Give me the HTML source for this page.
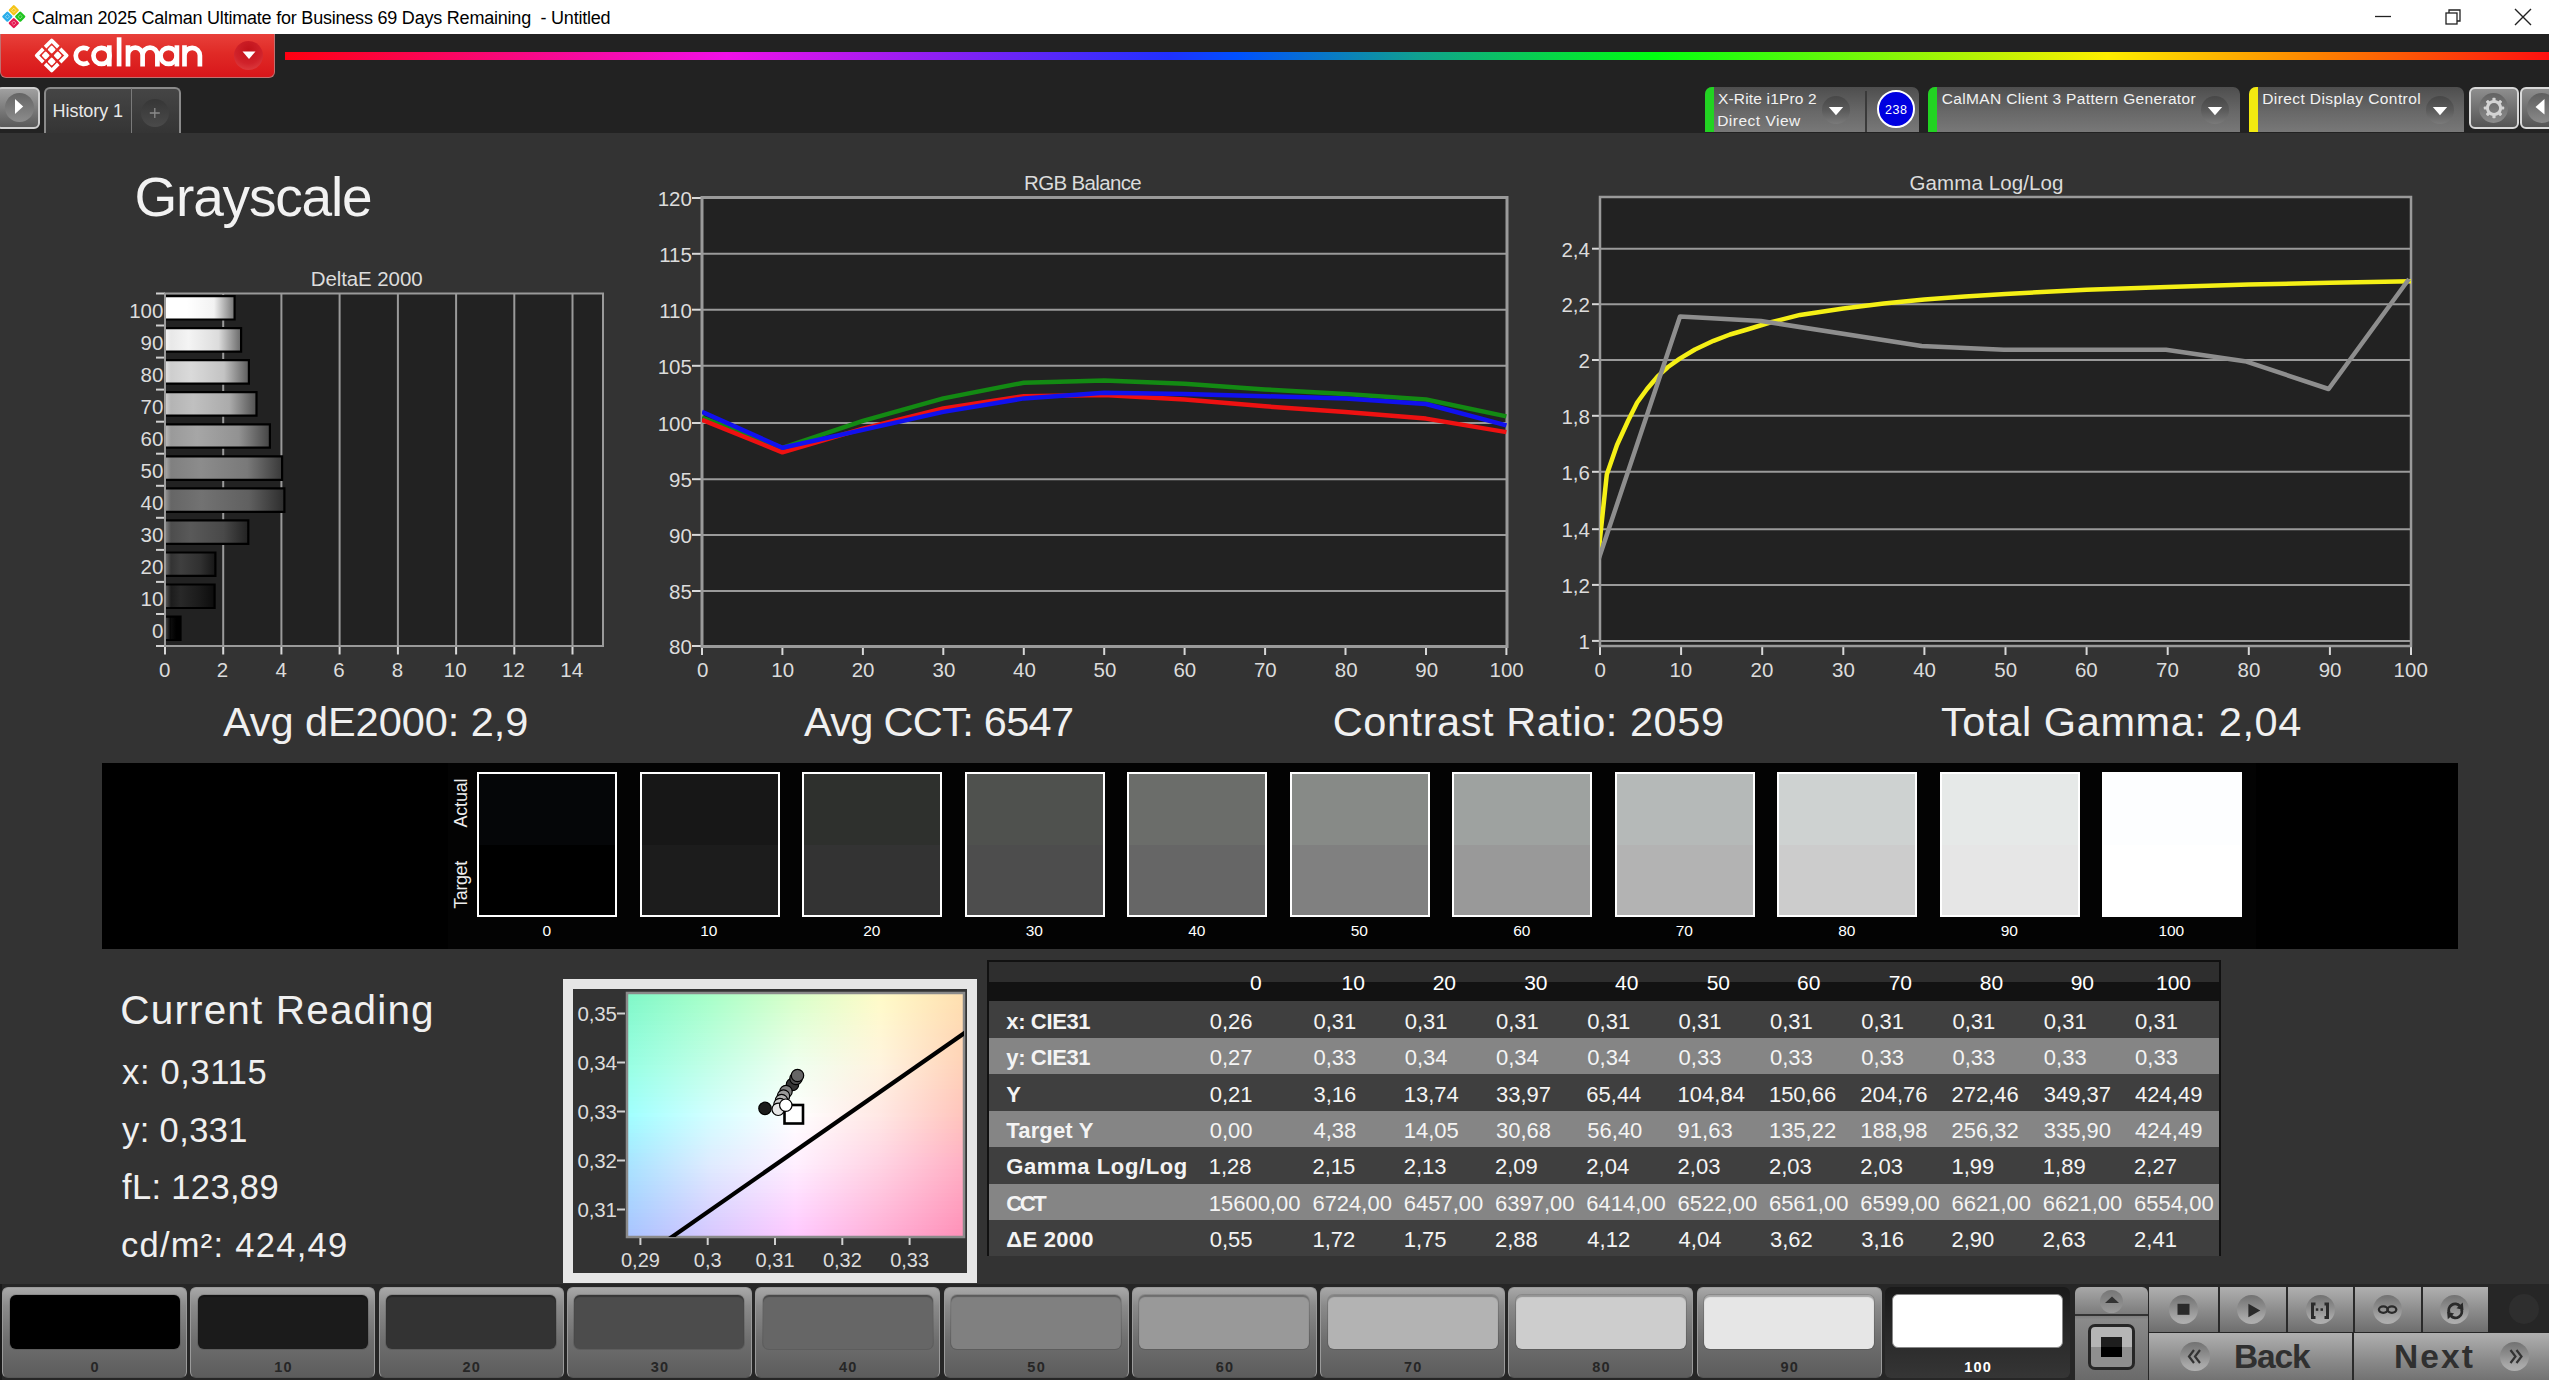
<!DOCTYPE html><html><head><meta charset="utf-8"><style>
*{box-sizing:border-box}
html,body{margin:0;padding:0}
body{width:2549px;height:1380px;overflow:hidden;position:relative;background:#333;font-family:"Liberation Sans", sans-serif;}
.a{position:absolute;white-space:nowrap}
svg{overflow:visible}
</style></head><body>

<div class="a" style="left:0;top:0;width:2549px;height:34px;background:#fff"></div>
<svg class="a" style="left:0;top:0" width="30" height="34" viewBox="0 0 30 34">
<g transform="translate(13.8,16.7) rotate(45)">
<rect x="-8.5" y="-8.5" width="7.9" height="7.9" rx="1.2" fill="#f5c518"/>
<rect x="0.6" y="-8.5" width="7.9" height="7.9" rx="1.2" fill="#1fc41f"/>
<rect x="-8.5" y="0.6" width="7.9" height="7.9" rx="1.2" fill="#2aaeea"/>
<rect x="0.6" y="0.6" width="7.9" height="7.9" rx="1.2" fill="#e51a50"/>
</g>
<g transform="translate(13.8,16.7) rotate(45)" fill="none" stroke="rgba(255,255,255,0.45)" stroke-width="0.9">
<rect x="-6" y="-6" width="3" height="3"/><rect x="3" y="-6" width="3" height="3"/><rect x="-6" y="3" width="3" height="3"/><rect x="3" y="3" width="3" height="3"/>
</g></svg>
<svg class="a" style="left:2360px;top:0" width="189" height="34">
<line x1="15" y1="16.5" x2="31" y2="16.5" stroke="#222" stroke-width="1.3"/>
<rect x="86" y="13" width="11" height="11" fill="none" stroke="#222" stroke-width="1.3"/>
<path d="M89 13 V10 H100 V21 H97" fill="none" stroke="#222" stroke-width="1.3"/>
<path d="M155 9 L171 25 M171 9 L155 25" stroke="#222" stroke-width="1.4"/>
</svg>
<div class="a" style="left:0;top:34px;width:2549px;height:99px;background:#222"></div>
<div class="a" style="left:0;top:34px;width:275px;height:44px;background:linear-gradient(#e8403a,#e02a26 45%,#d8161a);border:1px solid #c07070;border-top:none;border-radius:0 0 6px 6px"></div>
<svg class="a" style="left:0;top:34px" width="230" height="44" viewBox="0 34 230 44">
<g transform="translate(51.7,55.5) rotate(45)" fill="none" stroke="#fff" stroke-width="3.7" stroke-linejoin="round">
<path d="M-10.6 -1.3 V-10.6 H-1.3"/><path d="M1.3 -10.6 H10.6 V-1.3"/><path d="M10.6 1.3 V10.6 H1.3"/><path d="M-1.3 10.6 H-10.6 V1.3"/>
<g fill="#fff" stroke="none"><rect x="-7.3" y="-7.3" width="6.1" height="6.1" rx="1.2"/><rect x="1.2" y="-7.3" width="6.1" height="6.1" rx="1.2"/><rect x="-7.3" y="1.2" width="6.1" height="6.1" rx="1.2"/><rect x="1.2" y="1.2" width="6.1" height="6.1" rx="1.2"/></g>
</g>
<g fill="none" stroke="#fff" stroke-width="4.7">
<path d="M88.6 49.4 A8.05 8.05 0 1 0 88.6 62.3"/>
<circle cx="101.5" cy="55.85" r="8.05"/><path d="M109.3 45.3 V66.4"/>
<path d="M119.1 37.3 V66.4"/>
<path d="M128 45.3 V66.4 M128 55 A7.3 7.3 0 0 1 142.6 55 V66.4 M142.6 55 A7.3 7.3 0 0 1 157.4 55 V66.4"/>
<circle cx="168.6" cy="55.85" r="8.05"/><path d="M176.9 45.3 V66.4"/>
<path d="M184.5 45.3 V66.4 M184.5 55.5 A7.7 7.7 0 0 1 199.9 55.5 V66.4"/>
</g></svg>
<div class="a" style="left:234px;top:41px;width:29px;height:29px;border-radius:50%;background:radial-gradient(circle at 50% 30%,#c0121a,#d0222a 55%,#e24848)"></div>
<svg class="a" style="left:240px;top:49px" width="18" height="12"><path d="M2.5 2.5 L15.5 2.5 L9 10 Z" fill="#fff"/></svg>
<div class="a" style="left:285px;top:52px;width:2264px;height:8px;background:linear-gradient(90deg,#ff0010 0%,#f010e8 19.5%,#2030ff 39%,#0050ff 42%,#10a090 50%,#00ff10 60.5%,#ffee00 80.5%,#ff8000 90%,#ff1010 100%)"></div>
<div class="a" style="left:-4px;top:86.5px;width:44px;height:42px;border-radius:6px;border:2px solid #d0d0d0;background:linear-gradient(#a0a0a0,#5a5a5a)"></div>
<div class="a" style="left:5px;top:93px;width:29px;height:29px;border-radius:50%;background:linear-gradient(#646464,#8c8c8c)"></div>
<svg class="a" style="left:10px;top:96px" width="20" height="22"><path d="M5 3 L13.2 10.5 L5 18 Z" fill="#fff"/></svg>
<div class="a" style="left:44px;top:87px;width:137px;height:46px;border-radius:6px 6px 0 0;border:2px solid #8a8a8a;border-bottom:none;background:linear-gradient(#454545,#353535)"></div>
<div class="a" style="left:130.5px;top:88px;width:1.5px;height:45px;background:#7a7a7a"></div>
<div class="a" style="left:141px;top:98.5px;width:28px;height:28px;border-radius:50%;background:linear-gradient(#363636,#4a4a4a)"></div>
<svg class="a" style="left:144px;top:102px" width="21" height="21"><path d="M10.8 6 V16 M5.8 11 H15.8" stroke="#8a8a8a" stroke-width="1.3"/></svg>
<div class="a" style="left:1705px;top:87px;width:214px;height:45px;border-radius:7px 7px 0 0;background:linear-gradient(#4e4e4e,#686868 55%,#787878)"></div>
<div class="a" style="left:1705px;top:87px;width:9px;height:45px;border-radius:7px 0 0 0;background:#22d322"></div>
<div class="a" style="left:1822px;top:95.5px;width:28px;height:28px;border-radius:50%;background:linear-gradient(#474747,#5a5a5a 50%,#7a7a7a)"></div>
<svg class="a" style="left:1827px;top:105px" width="18" height="12"><path d="M1.8 2 L16.2 2 L9 10.2 Z" fill="#fff"/></svg>
<div class="a" style="left:1865px;top:91px;width:2px;height:41px;background:#3a3a3a"></div>
<div class="a" style="left:1877px;top:90px;width:38px;height:38px;border-radius:50%;background:#0000e0;border:2px solid #fff"></div>
<div class="a" style="left:1928px;top:87px;width:312px;height:45px;border-radius:7px 7px 0 0;background:linear-gradient(#4e4e4e,#686868 55%,#787878)"></div>
<div class="a" style="left:1928px;top:87px;width:9px;height:45px;border-radius:7px 0 0 0;background:#22d322"></div>
<div class="a" style="left:2201px;top:95.5px;width:28px;height:28px;border-radius:50%;background:linear-gradient(#474747,#5a5a5a 50%,#7a7a7a)"></div>
<svg class="a" style="left:2206px;top:105px" width="18" height="12"><path d="M1.8 2 L16.2 2 L9 10.2 Z" fill="#fff"/></svg>
<div class="a" style="left:2249px;top:87px;width:215px;height:45px;border-radius:7px 7px 0 0;background:linear-gradient(#4e4e4e,#686868 55%,#787878)"></div>
<div class="a" style="left:2249px;top:87px;width:9px;height:45px;border-radius:7px 0 0 0;background:#f2ea10"></div>
<div class="a" style="left:2426px;top:95.5px;width:28px;height:28px;border-radius:50%;background:linear-gradient(#474747,#5a5a5a 50%,#7a7a7a)"></div>
<svg class="a" style="left:2431px;top:105px" width="18" height="12"><path d="M1.8 2 L16.2 2 L9 10.2 Z" fill="#fff"/></svg>
<div class="a" style="left:2469px;top:86.5px;width:50px;height:42px;border-radius:6px;border:2px solid #d8d8d8;background:linear-gradient(#8e8e8e,#555)"></div>
<div class="a" style="left:2479px;top:93px;width:29px;height:30px;border-radius:50%;background:linear-gradient(#626262,#8c8c8c)"></div>
<svg class="a" style="left:2479.5px;top:94px" width="28" height="28" viewBox="-14 -14 28 28">
<g fill="#d4d4d4"><rect x="-1.6" y="-10.2" width="3.2" height="4" rx="0.8" transform="rotate(0)"/><rect x="-1.6" y="-10.2" width="3.2" height="4" rx="0.8" transform="rotate(45)"/><rect x="-1.6" y="-10.2" width="3.2" height="4" rx="0.8" transform="rotate(90)"/><rect x="-1.6" y="-10.2" width="3.2" height="4" rx="0.8" transform="rotate(135)"/><rect x="-1.6" y="-10.2" width="3.2" height="4" rx="0.8" transform="rotate(180)"/><rect x="-1.6" y="-10.2" width="3.2" height="4" rx="0.8" transform="rotate(225)"/><rect x="-1.6" y="-10.2" width="3.2" height="4" rx="0.8" transform="rotate(270)"/><rect x="-1.6" y="-10.2" width="3.2" height="4" rx="0.8" transform="rotate(315)"/></g>
<circle r="6.6" fill="none" stroke="#d4d4d4" stroke-width="3"/></svg>
<div class="a" style="left:2520px;top:86.5px;width:40px;height:42px;border-radius:6px;border:2px solid #d8d8d8;background:linear-gradient(#8e8e8e,#555)"></div>
<div class="a" style="left:2527px;top:93px;width:30px;height:30px;border-radius:50%;background:linear-gradient(#5e5e5e,#8a8a8a)"></div>
<svg class="a" style="left:2530px;top:96px" width="19" height="24"><path d="M14.5 3 L5.5 11 L14.5 18.5 Z" fill="#fff"/></svg>
<div class="a" style="left:0;top:133px;width:2549px;height:1151px;background:#333"></div>
<svg class="a" style="left:0;top:0" width="2549" height="1380"><defs><linearGradient id="bg0" gradientUnits="userSpaceOnUse" x1="166" x2="234.6" y1="0" y2="0"><stop offset="0" stop-color="rgb(255,255,255)"/><stop offset="0.073" stop-color="rgb(255,255,255)"/><stop offset="0.3" stop-color="rgb(255,255,255)"/><stop offset="0.7" stop-color="rgb(242,242,242)"/><stop offset="1" stop-color="rgb(114,114,114)"/></linearGradient><linearGradient id="bg1" gradientUnits="userSpaceOnUse" x1="166" x2="241.1" y1="0" y2="0"><stop offset="0" stop-color="rgb(245,245,245)"/><stop offset="0.067" stop-color="rgb(232,232,232)"/><stop offset="0.3" stop-color="rgb(244,244,244)"/><stop offset="0.7" stop-color="rgb(220,220,220)"/><stop offset="1" stop-color="rgb(104,104,104)"/></linearGradient><linearGradient id="bg2" gradientUnits="userSpaceOnUse" x1="166" x2="248.9" y1="0" y2="0"><stop offset="0" stop-color="rgb(224,224,224)"/><stop offset="0.060" stop-color="rgb(206,206,206)"/><stop offset="0.3" stop-color="rgb(218,218,218)"/><stop offset="0.7" stop-color="rgb(195,195,195)"/><stop offset="1" stop-color="rgb(92,92,92)"/></linearGradient><linearGradient id="bg3" gradientUnits="userSpaceOnUse" x1="166" x2="256.5" y1="0" y2="0"><stop offset="0" stop-color="rgb(204,204,204)"/><stop offset="0.055" stop-color="rgb(180,180,180)"/><stop offset="0.3" stop-color="rgb(192,192,192)"/><stop offset="0.7" stop-color="rgb(171,171,171)"/><stop offset="1" stop-color="rgb(81,81,81)"/></linearGradient><linearGradient id="bg4" gradientUnits="userSpaceOnUse" x1="166" x2="269.9" y1="0" y2="0"><stop offset="0" stop-color="rgb(183,183,183)"/><stop offset="0.048" stop-color="rgb(154,154,154)"/><stop offset="0.3" stop-color="rgb(166,166,166)"/><stop offset="0.7" stop-color="rgb(146,146,146)"/><stop offset="1" stop-color="rgb(69,69,69)"/></linearGradient><linearGradient id="bg5" gradientUnits="userSpaceOnUse" x1="166" x2="282.1" y1="0" y2="0"><stop offset="0" stop-color="rgb(162,162,162)"/><stop offset="0.043" stop-color="rgb(128,128,128)"/><stop offset="0.3" stop-color="rgb(140,140,140)"/><stop offset="0.7" stop-color="rgb(121,121,121)"/><stop offset="1" stop-color="rgb(57,57,57)"/></linearGradient><linearGradient id="bg6" gradientUnits="userSpaceOnUse" x1="166" x2="284.4" y1="0" y2="0"><stop offset="0" stop-color="rgb(141,141,141)"/><stop offset="0.042" stop-color="rgb(102,102,102)"/><stop offset="0.3" stop-color="rgb(114,114,114)"/><stop offset="0.7" stop-color="rgb(96,96,96)"/><stop offset="1" stop-color="rgb(45,45,45)"/></linearGradient><linearGradient id="bg7" gradientUnits="userSpaceOnUse" x1="166" x2="248.3" y1="0" y2="0"><stop offset="0" stop-color="rgb(121,121,121)"/><stop offset="0.061" stop-color="rgb(77,77,77)"/><stop offset="0.3" stop-color="rgb(89,89,89)"/><stop offset="0.7" stop-color="rgb(73,73,73)"/><stop offset="1" stop-color="rgb(34,34,34)"/></linearGradient><linearGradient id="bg8" gradientUnits="userSpaceOnUse" x1="166" x2="215.4" y1="0" y2="0"><stop offset="0" stop-color="rgb(100,100,100)"/><stop offset="0.101" stop-color="rgb(51,51,51)"/><stop offset="0.3" stop-color="rgb(63,63,63)"/><stop offset="0.7" stop-color="rgb(48,48,48)"/><stop offset="1" stop-color="rgb(22,22,22)"/></linearGradient><linearGradient id="bg9" gradientUnits="userSpaceOnUse" x1="166" x2="214.6" y1="0" y2="0"><stop offset="0" stop-color="rgb(82,82,82)"/><stop offset="0.103" stop-color="rgb(28,28,28)"/><stop offset="0.3" stop-color="rgb(40,40,40)"/><stop offset="0.7" stop-color="rgb(26,26,26)"/><stop offset="1" stop-color="rgb(12,12,12)"/></linearGradient><linearGradient id="bg10" gradientUnits="userSpaceOnUse" x1="166" x2="180.5" y1="0" y2="0"><stop offset="0" stop-color="rgb(60,60,60)"/><stop offset="0.345" stop-color="rgb(0,0,0)"/><stop offset="0.3" stop-color="rgb(12,12,12)"/><stop offset="0.7" stop-color="rgb(0,0,0)"/><stop offset="1" stop-color="rgb(0,0,0)"/></linearGradient><clipPath id="rclip"><rect x="702" y="197.5" width="805" height="449.0"/></clipPath><clipPath id="gclip"><rect x="1600" y="197" width="811" height="449"/></clipPath></defs><rect x="165" y="293.5" width="438" height="352.5" fill="#222"/><line x1="223.2" y1="293.5" x2="223.2" y2="646" stroke="#9a9a9a" stroke-width="2"/><line x1="281.4" y1="293.5" x2="281.4" y2="646" stroke="#9a9a9a" stroke-width="2"/><line x1="339.6" y1="293.5" x2="339.6" y2="646" stroke="#9a9a9a" stroke-width="2"/><line x1="397.9" y1="293.5" x2="397.9" y2="646" stroke="#9a9a9a" stroke-width="2"/><line x1="456.1" y1="293.5" x2="456.1" y2="646" stroke="#9a9a9a" stroke-width="2"/><line x1="514.3" y1="293.5" x2="514.3" y2="646" stroke="#9a9a9a" stroke-width="2"/><line x1="572.5" y1="293.5" x2="572.5" y2="646" stroke="#9a9a9a" stroke-width="2"/><line x1="156" y1="293.5" x2="165" y2="293.5" stroke="#d0d0d0" stroke-width="2"/><line x1="156" y1="325.5" x2="165" y2="325.5" stroke="#d0d0d0" stroke-width="2"/><line x1="156" y1="357.6" x2="165" y2="357.6" stroke="#d0d0d0" stroke-width="2"/><line x1="156" y1="389.6" x2="165" y2="389.6" stroke="#d0d0d0" stroke-width="2"/><line x1="156" y1="421.7" x2="165" y2="421.7" stroke="#d0d0d0" stroke-width="2"/><line x1="156" y1="453.7" x2="165" y2="453.7" stroke="#d0d0d0" stroke-width="2"/><line x1="156" y1="485.8" x2="165" y2="485.8" stroke="#d0d0d0" stroke-width="2"/><line x1="156" y1="517.8" x2="165" y2="517.8" stroke="#d0d0d0" stroke-width="2"/><line x1="156" y1="549.9" x2="165" y2="549.9" stroke="#d0d0d0" stroke-width="2"/><line x1="156" y1="581.9" x2="165" y2="581.9" stroke="#d0d0d0" stroke-width="2"/><line x1="156" y1="614.0" x2="165" y2="614.0" stroke="#d0d0d0" stroke-width="2"/><line x1="156" y1="646.0" x2="165" y2="646.0" stroke="#d0d0d0" stroke-width="2"/><line x1="165.0" y1="646" x2="165.0" y2="654.5" stroke="#d8d8d8" stroke-width="2"/><line x1="223.2" y1="646" x2="223.2" y2="654.5" stroke="#d8d8d8" stroke-width="2"/><line x1="281.4" y1="646" x2="281.4" y2="654.5" stroke="#d8d8d8" stroke-width="2"/><line x1="339.6" y1="646" x2="339.6" y2="654.5" stroke="#d8d8d8" stroke-width="2"/><line x1="397.9" y1="646" x2="397.9" y2="654.5" stroke="#d8d8d8" stroke-width="2"/><line x1="456.1" y1="646" x2="456.1" y2="654.5" stroke="#d8d8d8" stroke-width="2"/><line x1="514.3" y1="646" x2="514.3" y2="654.5" stroke="#d8d8d8" stroke-width="2"/><line x1="572.5" y1="646" x2="572.5" y2="654.5" stroke="#d8d8d8" stroke-width="2"/><rect x="165" y="293.5" width="438" height="352.5" fill="none" stroke="#9a9a9a" stroke-width="2"/><rect x="166" y="296.1" width="68.6" height="23.4" fill="url(#bg0)"/><path d="M166 296.1 H234.6 V319.5 H166" fill="none" stroke="#000" stroke-width="2.2"/><rect x="166" y="328.1" width="75.1" height="23.4" fill="url(#bg1)"/><path d="M166 328.1 H241.1 V351.6 H166" fill="none" stroke="#000" stroke-width="2.2"/><rect x="166" y="360.2" width="82.9" height="23.4" fill="url(#bg2)"/><path d="M166 360.2 H248.9 V383.6 H166" fill="none" stroke="#000" stroke-width="2.2"/><rect x="166" y="392.2" width="90.5" height="23.4" fill="url(#bg3)"/><path d="M166 392.2 H256.5 V415.7 H166" fill="none" stroke="#000" stroke-width="2.2"/><rect x="166" y="424.3" width="103.9" height="23.4" fill="url(#bg4)"/><path d="M166 424.3 H269.9 V447.7 H166" fill="none" stroke="#000" stroke-width="2.2"/><rect x="166" y="456.3" width="116.1" height="23.4" fill="url(#bg5)"/><path d="M166 456.3 H282.1 V479.8 H166" fill="none" stroke="#000" stroke-width="2.2"/><rect x="166" y="488.4" width="118.4" height="23.4" fill="url(#bg6)"/><path d="M166 488.4 H284.4 V511.8 H166" fill="none" stroke="#000" stroke-width="2.2"/><rect x="166" y="520.4" width="82.3" height="23.4" fill="url(#bg7)"/><path d="M166 520.4 H248.3 V543.9 H166" fill="none" stroke="#000" stroke-width="2.2"/><rect x="166" y="552.5" width="49.4" height="23.4" fill="url(#bg8)"/><path d="M166 552.5 H215.4 V575.9 H166" fill="none" stroke="#000" stroke-width="2.2"/><rect x="166" y="584.5" width="48.6" height="23.4" fill="url(#bg9)"/><path d="M166 584.5 H214.6 V608.0 H166" fill="none" stroke="#000" stroke-width="2.2"/><rect x="166" y="616.6" width="14.5" height="23.4" fill="url(#bg10)"/><path d="M166 616.6 H180.5 V640.0 H166" fill="none" stroke="#000" stroke-width="2.2"/><line x1="165" y1="293.5" x2="165" y2="646" stroke="#9a9a9a" stroke-width="2"/><rect x="702" y="197.5" width="805" height="449.0" fill="#222"/><line x1="702" y1="591.0" x2="1507" y2="591.0" stroke="#9a9a9a" stroke-width="2"/><line x1="702" y1="534.9" x2="1507" y2="534.9" stroke="#9a9a9a" stroke-width="2"/><line x1="702" y1="479.2" x2="1507" y2="479.2" stroke="#9a9a9a" stroke-width="2"/><line x1="702" y1="423.0" x2="1507" y2="423.0" stroke="#9a9a9a" stroke-width="2"/><line x1="702" y1="365.8" x2="1507" y2="365.8" stroke="#9a9a9a" stroke-width="2"/><line x1="702" y1="309.7" x2="1507" y2="309.7" stroke="#9a9a9a" stroke-width="2"/><line x1="702" y1="253.8" x2="1507" y2="253.8" stroke="#9a9a9a" stroke-width="2"/><line x1="692" y1="646.0" x2="702" y2="646.0" stroke="#d8d8d8" stroke-width="2"/><line x1="692" y1="591.0" x2="702" y2="591.0" stroke="#d8d8d8" stroke-width="2"/><line x1="692" y1="534.9" x2="702" y2="534.9" stroke="#d8d8d8" stroke-width="2"/><line x1="692" y1="479.2" x2="702" y2="479.2" stroke="#d8d8d8" stroke-width="2"/><line x1="692" y1="423.0" x2="702" y2="423.0" stroke="#d8d8d8" stroke-width="2"/><line x1="692" y1="365.8" x2="702" y2="365.8" stroke="#d8d8d8" stroke-width="2"/><line x1="692" y1="309.7" x2="702" y2="309.7" stroke="#d8d8d8" stroke-width="2"/><line x1="692" y1="253.8" x2="702" y2="253.8" stroke="#d8d8d8" stroke-width="2"/><line x1="692" y1="198.0" x2="702" y2="198.0" stroke="#d8d8d8" stroke-width="2"/><line x1="702.0" y1="647" x2="702.0" y2="655" stroke="#d8d8d8" stroke-width="2"/><line x1="782.4" y1="647" x2="782.4" y2="655" stroke="#d8d8d8" stroke-width="2"/><line x1="862.9" y1="647" x2="862.9" y2="655" stroke="#d8d8d8" stroke-width="2"/><line x1="943.3" y1="647" x2="943.3" y2="655" stroke="#d8d8d8" stroke-width="2"/><line x1="1023.8" y1="647" x2="1023.8" y2="655" stroke="#d8d8d8" stroke-width="2"/><line x1="1104.2" y1="647" x2="1104.2" y2="655" stroke="#d8d8d8" stroke-width="2"/><line x1="1184.6" y1="647" x2="1184.6" y2="655" stroke="#d8d8d8" stroke-width="2"/><line x1="1265.1" y1="647" x2="1265.1" y2="655" stroke="#d8d8d8" stroke-width="2"/><line x1="1345.5" y1="647" x2="1345.5" y2="655" stroke="#d8d8d8" stroke-width="2"/><line x1="1426.0" y1="647" x2="1426.0" y2="655" stroke="#d8d8d8" stroke-width="2"/><line x1="1506.4" y1="647" x2="1506.4" y2="655" stroke="#d8d8d8" stroke-width="2"/><rect x="702" y="197.5" width="805" height="449.0" fill="none" stroke="#9a9a9a" stroke-width="3"/><g clip-path="url(#rclip)"><polyline points="702.0,417.5 782.4,447.8 862.9,420.9 943.3,398.4 1023.8,382.7 1104.2,380.5 1184.6,383.8 1265.1,389.4 1345.5,393.9 1426.0,399.5 1506.4,416.4" fill="none" stroke="#138a13" stroke-width="4.5" stroke-linejoin="round"/><polyline points="702.0,419.8 782.4,452.3 862.9,428.7 943.3,408.5 1023.8,396.2 1104.2,395.1 1184.6,399.5 1265.1,406.3 1345.5,411.9 1426.0,418.6 1506.4,432.1" fill="none" stroke="#ee1111" stroke-width="4.5" stroke-linejoin="round"/><polyline points="702.0,411.9 782.4,447.8 862.9,429.9 943.3,411.9 1023.8,398.4 1104.2,392.8 1184.6,393.9 1265.1,396.2 1345.5,398.4 1426.0,404.0 1506.4,425.4" fill="none" stroke="#1111ee" stroke-width="4.5" stroke-linejoin="round"/></g><rect x="1600" y="197" width="811" height="449" fill="#222"/><line x1="1600" y1="640.9" x2="2411" y2="640.9" stroke="#9a9a9a" stroke-width="2"/><line x1="1592" y1="640.9" x2="1600" y2="640.9" stroke="#d8d8d8" stroke-width="2"/><line x1="1600" y1="584.9" x2="2411" y2="584.9" stroke="#9a9a9a" stroke-width="2"/><line x1="1592" y1="584.9" x2="1600" y2="584.9" stroke="#d8d8d8" stroke-width="2"/><line x1="1600" y1="529.2" x2="2411" y2="529.2" stroke="#9a9a9a" stroke-width="2"/><line x1="1592" y1="529.2" x2="1600" y2="529.2" stroke="#d8d8d8" stroke-width="2"/><line x1="1600" y1="471.8" x2="2411" y2="471.8" stroke="#9a9a9a" stroke-width="2"/><line x1="1592" y1="471.8" x2="1600" y2="471.8" stroke="#d8d8d8" stroke-width="2"/><line x1="1600" y1="415.8" x2="2411" y2="415.8" stroke="#9a9a9a" stroke-width="2"/><line x1="1592" y1="415.8" x2="1600" y2="415.8" stroke="#d8d8d8" stroke-width="2"/><line x1="1600" y1="360.0" x2="2411" y2="360.0" stroke="#9a9a9a" stroke-width="2"/><line x1="1592" y1="360.0" x2="1600" y2="360.0" stroke="#d8d8d8" stroke-width="2"/><line x1="1600" y1="304.2" x2="2411" y2="304.2" stroke="#9a9a9a" stroke-width="2"/><line x1="1592" y1="304.2" x2="1600" y2="304.2" stroke="#d8d8d8" stroke-width="2"/><line x1="1600" y1="248.7" x2="2411" y2="248.7" stroke="#9a9a9a" stroke-width="2"/><line x1="1592" y1="248.7" x2="1600" y2="248.7" stroke="#d8d8d8" stroke-width="2"/><line x1="1600.0" y1="647" x2="1600.0" y2="655" stroke="#d8d8d8" stroke-width="2"/><line x1="1681.1" y1="647" x2="1681.1" y2="655" stroke="#d8d8d8" stroke-width="2"/><line x1="1762.2" y1="647" x2="1762.2" y2="655" stroke="#d8d8d8" stroke-width="2"/><line x1="1843.3" y1="647" x2="1843.3" y2="655" stroke="#d8d8d8" stroke-width="2"/><line x1="1924.4" y1="647" x2="1924.4" y2="655" stroke="#d8d8d8" stroke-width="2"/><line x1="2005.5" y1="647" x2="2005.5" y2="655" stroke="#d8d8d8" stroke-width="2"/><line x1="2086.6" y1="647" x2="2086.6" y2="655" stroke="#d8d8d8" stroke-width="2"/><line x1="2167.7" y1="647" x2="2167.7" y2="655" stroke="#d8d8d8" stroke-width="2"/><line x1="2248.8" y1="647" x2="2248.8" y2="655" stroke="#d8d8d8" stroke-width="2"/><line x1="2329.9" y1="647" x2="2329.9" y2="655" stroke="#d8d8d8" stroke-width="2"/><line x1="2411.0" y1="647" x2="2411.0" y2="655" stroke="#d8d8d8" stroke-width="2"/><rect x="1600" y="197" width="811" height="449" fill="none" stroke="#9a9a9a" stroke-width="2.5"/><g clip-path="url(#gclip)"><polyline points="1597.9,558.6 1606.8,474.4 1617,445 1628.2,420.5 1637.2,402.5 1647,389 1657.4,376.7 1668,367 1679.8,358.7 1695,349.5 1713.5,340.8 1730,334.5 1747.2,329.5 1770,322.5 1800,314.9 1843.3,308.51 1883.85,303.52 1924.4,299.61 1964.95,296.47 2005.5,293.88 2086.6,289.87 2167.7,286.88 2248.8,284.56 2329.9,282.69 2411.0,281.16" fill="none" stroke="#f5f016" stroke-width="4.5" stroke-linejoin="round"/><polyline points="1598.7,559 1680,316.5 1761,321 1921.6,346 2003.8,349.8 2166,349.8 2246.5,361.6 2328.6,389 2409,279" fill="none" stroke="#8e8e8e" stroke-width="4.5" stroke-linejoin="round"/></g></svg>
<div class="a" style="left:102px;top:763px;width:2356px;height:186px;background:#000"></div>
<div class="a" style="left:448px;top:763px;width:1808px;height:186px;background:#030303"></div>
<div class="a" style="left:477.0px;top:772px;width:140px;height:145px;border:2px solid #fff;background:linear-gradient(#050608 50%,#000000 50%)"></div>
<div class="a" style="left:639.5px;top:772px;width:140px;height:145px;border:2px solid #fff;background:linear-gradient(#171717 50%,#1c1c1c 50%)"></div>
<div class="a" style="left:802.0px;top:772px;width:140px;height:145px;border:2px solid #fff;background:linear-gradient(#2e302d 50%,#333333 50%)"></div>
<div class="a" style="left:964.5px;top:772px;width:140px;height:145px;border:2px solid #fff;background:linear-gradient(#4f514e 50%,#4d4d4d 50%)"></div>
<div class="a" style="left:1127.0px;top:772px;width:140px;height:145px;border:2px solid #fff;background:linear-gradient(#6b6d6a 50%,#666666 50%)"></div>
<div class="a" style="left:1289.5px;top:772px;width:140px;height:145px;border:2px solid #fff;background:linear-gradient(#878a87 50%,#808080 50%)"></div>
<div class="a" style="left:1452.0px;top:772px;width:140px;height:145px;border:2px solid #fff;background:linear-gradient(#9ea2a0 50%,#999999 50%)"></div>
<div class="a" style="left:1614.5px;top:772px;width:140px;height:145px;border:2px solid #fff;background:linear-gradient(#b5b9b8 50%,#b3b3b3 50%)"></div>
<div class="a" style="left:1777.0px;top:772px;width:140px;height:145px;border:2px solid #fff;background:linear-gradient(#ced2d1 50%,#cccccc 50%)"></div>
<div class="a" style="left:1939.5px;top:772px;width:140px;height:145px;border:2px solid #fff;background:linear-gradient(#e6e9e8 50%,#e6e6e6 50%)"></div>
<div class="a" style="left:2102.0px;top:772px;width:140px;height:145px;border:2px solid #fff;background:linear-gradient(#fdfeff 50%,#ffffff 50%)"></div>
<div class="a" style="left:563px;top:979px;width:414px;height:304px;background:#333;border:10px solid #e6e6e6"></div>
<svg class="a" style="left:0;top:0" width="2549" height="1380"><defs><linearGradient id="cs0" x1="0" x2="1" y1="0" y2="0"><stop offset="0.0" stop-color="rgb(128,248,200)"/><stop offset="0.25" stop-color="rgb(168,255,200)"/><stop offset="0.5" stop-color="rgb(216,255,201)"/><stop offset="0.75" stop-color="rgb(255,251,200)"/><stop offset="1.0" stop-color="rgb(255,223,176)"/></linearGradient><linearGradient id="cs1" x1="0" x2="1" y1="0" y2="0"><stop offset="0.0" stop-color="rgb(129,248,202)"/><stop offset="0.25" stop-color="rgb(170,255,202)"/><stop offset="0.5" stop-color="rgb(217,255,203)"/><stop offset="0.75" stop-color="rgb(255,251,201)"/><stop offset="1.0" stop-color="rgb(255,222,176)"/></linearGradient><linearGradient id="cs2" x1="0" x2="1" y1="0" y2="0"><stop offset="0.0" stop-color="rgb(131,248,203)"/><stop offset="0.25" stop-color="rgb(171,255,204)"/><stop offset="0.5" stop-color="rgb(219,255,205)"/><stop offset="0.75" stop-color="rgb(255,250,203)"/><stop offset="1.0" stop-color="rgb(255,222,177)"/></linearGradient><linearGradient id="cs3" x1="0" x2="1" y1="0" y2="0"><stop offset="0.0" stop-color="rgb(132,249,205)"/><stop offset="0.25" stop-color="rgb(173,255,206)"/><stop offset="0.5" stop-color="rgb(220,255,207)"/><stop offset="0.75" stop-color="rgb(255,250,204)"/><stop offset="1.0" stop-color="rgb(255,221,177)"/></linearGradient><linearGradient id="cs4" x1="0" x2="1" y1="0" y2="0"><stop offset="0.0" stop-color="rgb(133,249,206)"/><stop offset="0.25" stop-color="rgb(174,255,207)"/><stop offset="0.5" stop-color="rgb(221,255,209)"/><stop offset="0.75" stop-color="rgb(255,250,205)"/><stop offset="1.0" stop-color="rgb(255,220,177)"/></linearGradient><linearGradient id="cs5" x1="0" x2="1" y1="0" y2="0"><stop offset="0.0" stop-color="rgb(135,250,208)"/><stop offset="0.25" stop-color="rgb(176,255,209)"/><stop offset="0.5" stop-color="rgb(223,255,212)"/><stop offset="0.75" stop-color="rgb(255,249,207)"/><stop offset="1.0" stop-color="rgb(255,219,178)"/></linearGradient><linearGradient id="cs6" x1="0" x2="1" y1="0" y2="0"><stop offset="0.0" stop-color="rgb(136,250,209)"/><stop offset="0.25" stop-color="rgb(177,255,211)"/><stop offset="0.5" stop-color="rgb(224,255,214)"/><stop offset="0.75" stop-color="rgb(255,249,208)"/><stop offset="1.0" stop-color="rgb(255,219,178)"/></linearGradient><linearGradient id="cs7" x1="0" x2="1" y1="0" y2="0"><stop offset="0.0" stop-color="rgb(137,250,211)"/><stop offset="0.25" stop-color="rgb(179,255,213)"/><stop offset="0.5" stop-color="rgb(225,255,216)"/><stop offset="0.75" stop-color="rgb(255,248,209)"/><stop offset="1.0" stop-color="rgb(255,218,179)"/></linearGradient><linearGradient id="cs8" x1="0" x2="1" y1="0" y2="0"><stop offset="0.0" stop-color="rgb(139,251,213)"/><stop offset="0.25" stop-color="rgb(181,255,214)"/><stop offset="0.5" stop-color="rgb(227,255,218)"/><stop offset="0.75" stop-color="rgb(255,248,211)"/><stop offset="1.0" stop-color="rgb(255,217,179)"/></linearGradient><linearGradient id="cs9" x1="0" x2="1" y1="0" y2="0"><stop offset="0.0" stop-color="rgb(140,251,214)"/><stop offset="0.25" stop-color="rgb(182,255,216)"/><stop offset="0.5" stop-color="rgb(228,255,220)"/><stop offset="0.75" stop-color="rgb(255,247,212)"/><stop offset="1.0" stop-color="rgb(255,216,180)"/></linearGradient><linearGradient id="cs10" x1="0" x2="1" y1="0" y2="0"><stop offset="0.0" stop-color="rgb(141,252,216)"/><stop offset="0.25" stop-color="rgb(184,255,218)"/><stop offset="0.5" stop-color="rgb(229,255,222)"/><stop offset="0.75" stop-color="rgb(255,247,213)"/><stop offset="1.0" stop-color="rgb(255,215,180)"/></linearGradient><linearGradient id="cs11" x1="0" x2="1" y1="0" y2="0"><stop offset="0.0" stop-color="rgb(143,252,217)"/><stop offset="0.25" stop-color="rgb(185,255,220)"/><stop offset="0.5" stop-color="rgb(231,255,225)"/><stop offset="0.75" stop-color="rgb(255,246,215)"/><stop offset="1.0" stop-color="rgb(255,215,181)"/></linearGradient><linearGradient id="cs12" x1="0" x2="1" y1="0" y2="0"><stop offset="0.0" stop-color="rgb(144,252,219)"/><stop offset="0.25" stop-color="rgb(187,255,221)"/><stop offset="0.5" stop-color="rgb(232,255,227)"/><stop offset="0.75" stop-color="rgb(255,246,216)"/><stop offset="1.0" stop-color="rgb(255,214,181)"/></linearGradient><linearGradient id="cs13" x1="0" x2="1" y1="0" y2="0"><stop offset="0.0" stop-color="rgb(145,253,220)"/><stop offset="0.25" stop-color="rgb(188,255,223)"/><stop offset="0.5" stop-color="rgb(233,255,229)"/><stop offset="0.75" stop-color="rgb(255,246,217)"/><stop offset="1.0" stop-color="rgb(255,213,181)"/></linearGradient><linearGradient id="cs14" x1="0" x2="1" y1="0" y2="0"><stop offset="0.0" stop-color="rgb(147,253,222)"/><stop offset="0.25" stop-color="rgb(190,255,225)"/><stop offset="0.5" stop-color="rgb(235,255,231)"/><stop offset="0.75" stop-color="rgb(255,245,219)"/><stop offset="1.0" stop-color="rgb(255,212,182)"/></linearGradient><linearGradient id="cs15" x1="0" x2="1" y1="0" y2="0"><stop offset="0.0" stop-color="rgb(148,253,223)"/><stop offset="0.25" stop-color="rgb(191,255,227)"/><stop offset="0.5" stop-color="rgb(236,255,233)"/><stop offset="0.75" stop-color="rgb(255,245,220)"/><stop offset="1.0" stop-color="rgb(255,212,182)"/></linearGradient><linearGradient id="cs16" x1="0" x2="1" y1="0" y2="0"><stop offset="0.0" stop-color="rgb(149,254,225)"/><stop offset="0.25" stop-color="rgb(193,255,228)"/><stop offset="0.5" stop-color="rgb(237,255,236)"/><stop offset="0.75" stop-color="rgb(255,244,221)"/><stop offset="1.0" stop-color="rgb(255,211,183)"/></linearGradient><linearGradient id="cs17" x1="0" x2="1" y1="0" y2="0"><stop offset="0.0" stop-color="rgb(150,254,226)"/><stop offset="0.25" stop-color="rgb(194,255,230)"/><stop offset="0.5" stop-color="rgb(238,255,238)"/><stop offset="0.75" stop-color="rgb(255,244,222)"/><stop offset="1.0" stop-color="rgb(255,210,183)"/></linearGradient><linearGradient id="cs18" x1="0" x2="1" y1="0" y2="0"><stop offset="0.0" stop-color="rgb(152,255,228)"/><stop offset="0.25" stop-color="rgb(196,255,232)"/><stop offset="0.5" stop-color="rgb(240,255,240)"/><stop offset="0.75" stop-color="rgb(255,243,224)"/><stop offset="1.0" stop-color="rgb(255,209,184)"/></linearGradient><linearGradient id="cs19" x1="0" x2="1" y1="0" y2="0"><stop offset="0.0" stop-color="rgb(152,255,230)"/><stop offset="0.25" stop-color="rgb(197,255,234)"/><stop offset="0.5" stop-color="rgb(241,255,241)"/><stop offset="0.75" stop-color="rgb(255,242,224)"/><stop offset="1.0" stop-color="rgb(255,208,184)"/></linearGradient><linearGradient id="cs20" x1="0" x2="1" y1="0" y2="0"><stop offset="0.0" stop-color="rgb(153,255,232)"/><stop offset="0.25" stop-color="rgb(198,255,236)"/><stop offset="0.5" stop-color="rgb(242,255,242)"/><stop offset="0.75" stop-color="rgb(255,241,224)"/><stop offset="1.0" stop-color="rgb(255,207,184)"/></linearGradient><linearGradient id="cs21" x1="0" x2="1" y1="0" y2="0"><stop offset="0.0" stop-color="rgb(154,255,235)"/><stop offset="0.25" stop-color="rgb(200,255,238)"/><stop offset="0.5" stop-color="rgb(243,255,243)"/><stop offset="0.75" stop-color="rgb(255,240,225)"/><stop offset="1.0" stop-color="rgb(255,206,185)"/></linearGradient><linearGradient id="cs22" x1="0" x2="1" y1="0" y2="0"><stop offset="0.0" stop-color="rgb(154,255,237)"/><stop offset="0.25" stop-color="rgb(201,255,239)"/><stop offset="0.5" stop-color="rgb(245,255,245)"/><stop offset="0.75" stop-color="rgb(255,239,225)"/><stop offset="1.0" stop-color="rgb(255,205,185)"/></linearGradient><linearGradient id="cs23" x1="0" x2="1" y1="0" y2="0"><stop offset="0.0" stop-color="rgb(155,255,239)"/><stop offset="0.25" stop-color="rgb(202,255,241)"/><stop offset="0.5" stop-color="rgb(246,255,246)"/><stop offset="0.75" stop-color="rgb(255,238,225)"/><stop offset="1.0" stop-color="rgb(255,204,185)"/></linearGradient><linearGradient id="cs24" x1="0" x2="1" y1="0" y2="0"><stop offset="0.0" stop-color="rgb(156,255,241)"/><stop offset="0.25" stop-color="rgb(204,255,243)"/><stop offset="0.5" stop-color="rgb(247,255,247)"/><stop offset="0.75" stop-color="rgb(255,237,226)"/><stop offset="1.0" stop-color="rgb(255,202,186)"/></linearGradient><linearGradient id="cs25" x1="0" x2="1" y1="0" y2="0"><stop offset="0.0" stop-color="rgb(156,255,243)"/><stop offset="0.25" stop-color="rgb(205,255,245)"/><stop offset="0.5" stop-color="rgb(248,255,248)"/><stop offset="0.75" stop-color="rgb(255,236,226)"/><stop offset="1.0" stop-color="rgb(255,201,186)"/></linearGradient><linearGradient id="cs26" x1="0" x2="1" y1="0" y2="0"><stop offset="0.0" stop-color="rgb(157,255,246)"/><stop offset="0.25" stop-color="rgb(206,255,247)"/><stop offset="0.5" stop-color="rgb(250,255,250)"/><stop offset="0.75" stop-color="rgb(255,235,226)"/><stop offset="1.0" stop-color="rgb(255,200,186)"/></linearGradient><linearGradient id="cs27" x1="0" x2="1" y1="0" y2="0"><stop offset="0.0" stop-color="rgb(158,255,248)"/><stop offset="0.25" stop-color="rgb(208,255,249)"/><stop offset="0.5" stop-color="rgb(251,255,251)"/><stop offset="0.75" stop-color="rgb(255,234,227)"/><stop offset="1.0" stop-color="rgb(255,199,187)"/></linearGradient><linearGradient id="cs28" x1="0" x2="1" y1="0" y2="0"><stop offset="0.0" stop-color="rgb(158,255,250)"/><stop offset="0.25" stop-color="rgb(209,255,251)"/><stop offset="0.5" stop-color="rgb(252,255,252)"/><stop offset="0.75" stop-color="rgb(255,233,227)"/><stop offset="1.0" stop-color="rgb(255,198,187)"/></linearGradient><linearGradient id="cs29" x1="0" x2="1" y1="0" y2="0"><stop offset="0.0" stop-color="rgb(159,255,252)"/><stop offset="0.25" stop-color="rgb(210,255,253)"/><stop offset="0.5" stop-color="rgb(253,255,253)"/><stop offset="0.75" stop-color="rgb(255,232,227)"/><stop offset="1.0" stop-color="rgb(255,197,187)"/></linearGradient><linearGradient id="cs30" x1="0" x2="1" y1="0" y2="0"><stop offset="0.0" stop-color="rgb(160,255,255)"/><stop offset="0.25" stop-color="rgb(212,255,255)"/><stop offset="0.5" stop-color="rgb(255,255,255)"/><stop offset="0.75" stop-color="rgb(255,232,228)"/><stop offset="1.0" stop-color="rgb(255,196,188)"/></linearGradient><linearGradient id="cs31" x1="0" x2="1" y1="0" y2="0"><stop offset="0.0" stop-color="rgb(160,252,255)"/><stop offset="0.25" stop-color="rgb(212,253,255)"/><stop offset="0.5" stop-color="rgb(255,253,255)"/><stop offset="0.75" stop-color="rgb(255,230,228)"/><stop offset="1.0" stop-color="rgb(255,194,188)"/></linearGradient><linearGradient id="cs32" x1="0" x2="1" y1="0" y2="0"><stop offset="0.0" stop-color="rgb(161,250,255)"/><stop offset="0.25" stop-color="rgb(213,251,255)"/><stop offset="0.5" stop-color="rgb(255,252,255)"/><stop offset="0.75" stop-color="rgb(255,228,228)"/><stop offset="1.0" stop-color="rgb(255,192,189)"/></linearGradient><linearGradient id="cs33" x1="0" x2="1" y1="0" y2="0"><stop offset="0.0" stop-color="rgb(161,248,255)"/><stop offset="0.25" stop-color="rgb(214,250,255)"/><stop offset="0.5" stop-color="rgb(255,251,255)"/><stop offset="0.75" stop-color="rgb(255,227,228)"/><stop offset="1.0" stop-color="rgb(255,191,189)"/></linearGradient><linearGradient id="cs34" x1="0" x2="1" y1="0" y2="0"><stop offset="0.0" stop-color="rgb(162,246,255)"/><stop offset="0.25" stop-color="rgb(215,248,255)"/><stop offset="0.5" stop-color="rgb(255,250,255)"/><stop offset="0.75" stop-color="rgb(255,225,228)"/><stop offset="1.0" stop-color="rgb(255,189,190)"/></linearGradient><linearGradient id="cs35" x1="0" x2="1" y1="0" y2="0"><stop offset="0.0" stop-color="rgb(163,243,255)"/><stop offset="0.25" stop-color="rgb(216,247,255)"/><stop offset="0.5" stop-color="rgb(255,248,255)"/><stop offset="0.75" stop-color="rgb(255,223,228)"/><stop offset="1.0" stop-color="rgb(255,187,191)"/></linearGradient><linearGradient id="cs36" x1="0" x2="1" y1="0" y2="0"><stop offset="0.0" stop-color="rgb(163,241,255)"/><stop offset="0.25" stop-color="rgb(217,245,255)"/><stop offset="0.5" stop-color="rgb(255,247,255)"/><stop offset="0.75" stop-color="rgb(255,222,228)"/><stop offset="1.0" stop-color="rgb(255,186,191)"/></linearGradient><linearGradient id="cs37" x1="0" x2="1" y1="0" y2="0"><stop offset="0.0" stop-color="rgb(164,239,255)"/><stop offset="0.25" stop-color="rgb(218,244,255)"/><stop offset="0.5" stop-color="rgb(255,246,255)"/><stop offset="0.75" stop-color="rgb(255,220,228)"/><stop offset="1.0" stop-color="rgb(255,184,192)"/></linearGradient><linearGradient id="cs38" x1="0" x2="1" y1="0" y2="0"><stop offset="0.0" stop-color="rgb(165,237,255)"/><stop offset="0.25" stop-color="rgb(219,242,255)"/><stop offset="0.5" stop-color="rgb(255,245,255)"/><stop offset="0.75" stop-color="rgb(255,218,228)"/><stop offset="1.0" stop-color="rgb(255,182,193)"/></linearGradient><linearGradient id="cs39" x1="0" x2="1" y1="0" y2="0"><stop offset="0.0" stop-color="rgb(165,235,255)"/><stop offset="0.25" stop-color="rgb(220,240,255)"/><stop offset="0.5" stop-color="rgb(255,243,255)"/><stop offset="0.75" stop-color="rgb(255,217,228)"/><stop offset="1.0" stop-color="rgb(255,181,193)"/></linearGradient><linearGradient id="cs40" x1="0" x2="1" y1="0" y2="0"><stop offset="0.0" stop-color="rgb(166,232,255)"/><stop offset="0.25" stop-color="rgb(221,239,255)"/><stop offset="0.5" stop-color="rgb(255,242,255)"/><stop offset="0.75" stop-color="rgb(255,215,228)"/><stop offset="1.0" stop-color="rgb(255,179,194)"/></linearGradient><linearGradient id="cs41" x1="0" x2="1" y1="0" y2="0"><stop offset="0.0" stop-color="rgb(167,230,255)"/><stop offset="0.25" stop-color="rgb(222,237,255)"/><stop offset="0.5" stop-color="rgb(255,241,255)"/><stop offset="0.75" stop-color="rgb(255,213,228)"/><stop offset="1.0" stop-color="rgb(255,177,195)"/></linearGradient><linearGradient id="cs42" x1="0" x2="1" y1="0" y2="0"><stop offset="0.0" stop-color="rgb(167,228,255)"/><stop offset="0.25" stop-color="rgb(223,236,255)"/><stop offset="0.5" stop-color="rgb(255,240,255)"/><stop offset="0.75" stop-color="rgb(255,212,228)"/><stop offset="1.0" stop-color="rgb(255,176,195)"/></linearGradient><linearGradient id="cs43" x1="0" x2="1" y1="0" y2="0"><stop offset="0.0" stop-color="rgb(168,226,255)"/><stop offset="0.25" stop-color="rgb(223,234,255)"/><stop offset="0.5" stop-color="rgb(255,238,255)"/><stop offset="0.75" stop-color="rgb(255,210,227)"/><stop offset="1.0" stop-color="rgb(255,174,195)"/></linearGradient><linearGradient id="cs44" x1="0" x2="1" y1="0" y2="0"><stop offset="0.0" stop-color="rgb(168,224,255)"/><stop offset="0.25" stop-color="rgb(223,232,255)"/><stop offset="0.5" stop-color="rgb(255,236,255)"/><stop offset="0.75" stop-color="rgb(255,208,226)"/><stop offset="1.0" stop-color="rgb(255,172,194)"/></linearGradient><linearGradient id="cs45" x1="0" x2="1" y1="0" y2="0"><stop offset="0.0" stop-color="rgb(168,223,255)"/><stop offset="0.25" stop-color="rgb(222,230,255)"/><stop offset="0.5" stop-color="rgb(255,233,255)"/><stop offset="0.75" stop-color="rgb(255,206,226)"/><stop offset="1.0" stop-color="rgb(255,171,194)"/></linearGradient><linearGradient id="cs46" x1="0" x2="1" y1="0" y2="0"><stop offset="0.0" stop-color="rgb(168,221,255)"/><stop offset="0.25" stop-color="rgb(222,228,255)"/><stop offset="0.5" stop-color="rgb(255,231,255)"/><stop offset="0.75" stop-color="rgb(255,204,225)"/><stop offset="1.0" stop-color="rgb(255,169,193)"/></linearGradient><linearGradient id="cs47" x1="0" x2="1" y1="0" y2="0"><stop offset="0.0" stop-color="rgb(168,219,255)"/><stop offset="0.25" stop-color="rgb(221,226,255)"/><stop offset="0.5" stop-color="rgb(255,229,255)"/><stop offset="0.75" stop-color="rgb(255,202,224)"/><stop offset="1.0" stop-color="rgb(255,167,192)"/></linearGradient><linearGradient id="cs48" x1="0" x2="1" y1="0" y2="0"><stop offset="0.0" stop-color="rgb(168,217,255)"/><stop offset="0.25" stop-color="rgb(221,224,255)"/><stop offset="0.5" stop-color="rgb(255,227,255)"/><stop offset="0.75" stop-color="rgb(255,200,224)"/><stop offset="1.0" stop-color="rgb(255,165,192)"/></linearGradient><linearGradient id="cs49" x1="0" x2="1" y1="0" y2="0"><stop offset="0.0" stop-color="rgb(168,216,255)"/><stop offset="0.25" stop-color="rgb(221,222,255)"/><stop offset="0.5" stop-color="rgb(255,225,255)"/><stop offset="0.75" stop-color="rgb(255,198,223)"/><stop offset="1.0" stop-color="rgb(255,164,191)"/></linearGradient><linearGradient id="cs50" x1="0" x2="1" y1="0" y2="0"><stop offset="0.0" stop-color="rgb(168,214,255)"/><stop offset="0.25" stop-color="rgb(220,220,255)"/><stop offset="0.5" stop-color="rgb(255,222,255)"/><stop offset="0.75" stop-color="rgb(255,196,222)"/><stop offset="1.0" stop-color="rgb(255,162,190)"/></linearGradient><linearGradient id="cs51" x1="0" x2="1" y1="0" y2="0"><stop offset="0.0" stop-color="rgb(168,212,255)"/><stop offset="0.25" stop-color="rgb(220,218,255)"/><stop offset="0.5" stop-color="rgb(255,220,255)"/><stop offset="0.75" stop-color="rgb(255,194,222)"/><stop offset="1.0" stop-color="rgb(255,160,190)"/></linearGradient><linearGradient id="cs52" x1="0" x2="1" y1="0" y2="0"><stop offset="0.0" stop-color="rgb(168,210,255)"/><stop offset="0.25" stop-color="rgb(219,216,255)"/><stop offset="0.5" stop-color="rgb(255,218,255)"/><stop offset="0.75" stop-color="rgb(255,192,221)"/><stop offset="1.0" stop-color="rgb(255,158,189)"/></linearGradient><linearGradient id="cs53" x1="0" x2="1" y1="0" y2="0"><stop offset="0.0" stop-color="rgb(168,209,255)"/><stop offset="0.25" stop-color="rgb(219,214,255)"/><stop offset="0.5" stop-color="rgb(255,216,255)"/><stop offset="0.75" stop-color="rgb(255,190,220)"/><stop offset="1.0" stop-color="rgb(255,157,188)"/></linearGradient><linearGradient id="cs54" x1="0" x2="1" y1="0" y2="0"><stop offset="0.0" stop-color="rgb(168,207,255)"/><stop offset="0.25" stop-color="rgb(218,212,255)"/><stop offset="0.5" stop-color="rgb(255,214,255)"/><stop offset="0.75" stop-color="rgb(255,188,220)"/><stop offset="1.0" stop-color="rgb(255,155,188)"/></linearGradient><linearGradient id="cs55" x1="0" x2="1" y1="0" y2="0"><stop offset="0.0" stop-color="rgb(168,205,255)"/><stop offset="0.25" stop-color="rgb(218,210,255)"/><stop offset="0.5" stop-color="rgb(255,212,255)"/><stop offset="0.75" stop-color="rgb(255,186,219)"/><stop offset="1.0" stop-color="rgb(255,153,187)"/></linearGradient><linearGradient id="cs56" x1="0" x2="1" y1="0" y2="0"><stop offset="0.0" stop-color="rgb(168,203,255)"/><stop offset="0.25" stop-color="rgb(217,208,255)"/><stop offset="0.5" stop-color="rgb(255,209,255)"/><stop offset="0.75" stop-color="rgb(255,184,218)"/><stop offset="1.0" stop-color="rgb(255,151,186)"/></linearGradient><linearGradient id="cs57" x1="0" x2="1" y1="0" y2="0"><stop offset="0.0" stop-color="rgb(168,202,255)"/><stop offset="0.25" stop-color="rgb(217,206,255)"/><stop offset="0.5" stop-color="rgb(255,207,255)"/><stop offset="0.75" stop-color="rgb(255,182,218)"/><stop offset="1.0" stop-color="rgb(255,150,186)"/></linearGradient><linearGradient id="cs58" x1="0" x2="1" y1="0" y2="0"><stop offset="0.0" stop-color="rgb(168,200,255)"/><stop offset="0.25" stop-color="rgb(217,204,255)"/><stop offset="0.5" stop-color="rgb(255,205,255)"/><stop offset="0.75" stop-color="rgb(255,180,217)"/><stop offset="1.0" stop-color="rgb(255,148,185)"/></linearGradient><linearGradient id="cs59" x1="0" x2="1" y1="0" y2="0"><stop offset="0.0" stop-color="rgb(168,198,255)"/><stop offset="0.25" stop-color="rgb(216,202,255)"/><stop offset="0.5" stop-color="rgb(255,203,255)"/><stop offset="0.75" stop-color="rgb(255,178,216)"/><stop offset="1.0" stop-color="rgb(255,146,184)"/></linearGradient><linearGradient id="cs60" x1="0" x2="1" y1="0" y2="0"><stop offset="0.0" stop-color="rgb(168,196,255)"/><stop offset="0.25" stop-color="rgb(216,200,255)"/><stop offset="0.5" stop-color="rgb(255,201,255)"/><stop offset="0.75" stop-color="rgb(255,176,216)"/><stop offset="1.0" stop-color="rgb(255,144,184)"/></linearGradient></defs><defs><clipPath id="cclip"><rect x="627" y="993" width="337" height="244"/></clipPath></defs><rect x="627" y="993" width="337" height="4" fill="url(#cs0)" shape-rendering="crispEdges"/><rect x="627" y="997" width="337" height="4" fill="url(#cs1)" shape-rendering="crispEdges"/><rect x="627" y="1001" width="337" height="4" fill="url(#cs2)" shape-rendering="crispEdges"/><rect x="627" y="1005" width="337" height="4" fill="url(#cs3)" shape-rendering="crispEdges"/><rect x="627" y="1009" width="337" height="4" fill="url(#cs4)" shape-rendering="crispEdges"/><rect x="627" y="1013" width="337" height="4" fill="url(#cs5)" shape-rendering="crispEdges"/><rect x="627" y="1017" width="337" height="4" fill="url(#cs6)" shape-rendering="crispEdges"/><rect x="627" y="1021" width="337" height="4" fill="url(#cs7)" shape-rendering="crispEdges"/><rect x="627" y="1025" width="337" height="4" fill="url(#cs8)" shape-rendering="crispEdges"/><rect x="627" y="1029" width="337" height="4" fill="url(#cs9)" shape-rendering="crispEdges"/><rect x="627" y="1033" width="337" height="4" fill="url(#cs10)" shape-rendering="crispEdges"/><rect x="627" y="1037" width="337" height="4" fill="url(#cs11)" shape-rendering="crispEdges"/><rect x="627" y="1041" width="337" height="4" fill="url(#cs12)" shape-rendering="crispEdges"/><rect x="627" y="1045" width="337" height="4" fill="url(#cs13)" shape-rendering="crispEdges"/><rect x="627" y="1049" width="337" height="4" fill="url(#cs14)" shape-rendering="crispEdges"/><rect x="627" y="1053" width="337" height="4" fill="url(#cs15)" shape-rendering="crispEdges"/><rect x="627" y="1057" width="337" height="4" fill="url(#cs16)" shape-rendering="crispEdges"/><rect x="627" y="1061" width="337" height="4" fill="url(#cs17)" shape-rendering="crispEdges"/><rect x="627" y="1065" width="337" height="4" fill="url(#cs18)" shape-rendering="crispEdges"/><rect x="627" y="1069" width="337" height="4" fill="url(#cs19)" shape-rendering="crispEdges"/><rect x="627" y="1073" width="337" height="4" fill="url(#cs20)" shape-rendering="crispEdges"/><rect x="627" y="1077" width="337" height="4" fill="url(#cs21)" shape-rendering="crispEdges"/><rect x="627" y="1081" width="337" height="4" fill="url(#cs22)" shape-rendering="crispEdges"/><rect x="627" y="1085" width="337" height="4" fill="url(#cs23)" shape-rendering="crispEdges"/><rect x="627" y="1089" width="337" height="4" fill="url(#cs24)" shape-rendering="crispEdges"/><rect x="627" y="1093" width="337" height="4" fill="url(#cs25)" shape-rendering="crispEdges"/><rect x="627" y="1097" width="337" height="4" fill="url(#cs26)" shape-rendering="crispEdges"/><rect x="627" y="1101" width="337" height="4" fill="url(#cs27)" shape-rendering="crispEdges"/><rect x="627" y="1105" width="337" height="4" fill="url(#cs28)" shape-rendering="crispEdges"/><rect x="627" y="1109" width="337" height="4" fill="url(#cs29)" shape-rendering="crispEdges"/><rect x="627" y="1113" width="337" height="4" fill="url(#cs30)" shape-rendering="crispEdges"/><rect x="627" y="1117" width="337" height="4" fill="url(#cs31)" shape-rendering="crispEdges"/><rect x="627" y="1121" width="337" height="4" fill="url(#cs32)" shape-rendering="crispEdges"/><rect x="627" y="1125" width="337" height="4" fill="url(#cs33)" shape-rendering="crispEdges"/><rect x="627" y="1129" width="337" height="4" fill="url(#cs34)" shape-rendering="crispEdges"/><rect x="627" y="1133" width="337" height="4" fill="url(#cs35)" shape-rendering="crispEdges"/><rect x="627" y="1137" width="337" height="4" fill="url(#cs36)" shape-rendering="crispEdges"/><rect x="627" y="1141" width="337" height="4" fill="url(#cs37)" shape-rendering="crispEdges"/><rect x="627" y="1145" width="337" height="4" fill="url(#cs38)" shape-rendering="crispEdges"/><rect x="627" y="1149" width="337" height="4" fill="url(#cs39)" shape-rendering="crispEdges"/><rect x="627" y="1153" width="337" height="4" fill="url(#cs40)" shape-rendering="crispEdges"/><rect x="627" y="1157" width="337" height="4" fill="url(#cs41)" shape-rendering="crispEdges"/><rect x="627" y="1161" width="337" height="4" fill="url(#cs42)" shape-rendering="crispEdges"/><rect x="627" y="1165" width="337" height="4" fill="url(#cs43)" shape-rendering="crispEdges"/><rect x="627" y="1169" width="337" height="4" fill="url(#cs44)" shape-rendering="crispEdges"/><rect x="627" y="1173" width="337" height="4" fill="url(#cs45)" shape-rendering="crispEdges"/><rect x="627" y="1177" width="337" height="4" fill="url(#cs46)" shape-rendering="crispEdges"/><rect x="627" y="1181" width="337" height="4" fill="url(#cs47)" shape-rendering="crispEdges"/><rect x="627" y="1185" width="337" height="4" fill="url(#cs48)" shape-rendering="crispEdges"/><rect x="627" y="1189" width="337" height="4" fill="url(#cs49)" shape-rendering="crispEdges"/><rect x="627" y="1193" width="337" height="4" fill="url(#cs50)" shape-rendering="crispEdges"/><rect x="627" y="1197" width="337" height="4" fill="url(#cs51)" shape-rendering="crispEdges"/><rect x="627" y="1201" width="337" height="4" fill="url(#cs52)" shape-rendering="crispEdges"/><rect x="627" y="1205" width="337" height="4" fill="url(#cs53)" shape-rendering="crispEdges"/><rect x="627" y="1209" width="337" height="4" fill="url(#cs54)" shape-rendering="crispEdges"/><rect x="627" y="1213" width="337" height="4" fill="url(#cs55)" shape-rendering="crispEdges"/><rect x="627" y="1217" width="337" height="4" fill="url(#cs56)" shape-rendering="crispEdges"/><rect x="627" y="1221" width="337" height="4" fill="url(#cs57)" shape-rendering="crispEdges"/><rect x="627" y="1225" width="337" height="4" fill="url(#cs58)" shape-rendering="crispEdges"/><rect x="627" y="1229" width="337" height="4" fill="url(#cs59)" shape-rendering="crispEdges"/><rect x="627" y="1233" width="337" height="4" fill="url(#cs60)" shape-rendering="crispEdges"/><rect x="627" y="993" width="337" height="244" fill="none" stroke="#8a8a8a" stroke-width="2.5"/><line x1="669" y1="1239" x2="966" y2="1032" stroke="#000" stroke-width="4.2" clip-path="url(#cclip)"/><line x1="617" y1="1013.5" x2="625" y2="1013.5" stroke="#d0d0d0" stroke-width="2"/><line x1="617" y1="1062.5" x2="625" y2="1062.5" stroke="#d0d0d0" stroke-width="2"/><line x1="617" y1="1111.5" x2="625" y2="1111.5" stroke="#d0d0d0" stroke-width="2"/><line x1="617" y1="1160.5" x2="625" y2="1160.5" stroke="#d0d0d0" stroke-width="2"/><line x1="617" y1="1209.5" x2="625" y2="1209.5" stroke="#d0d0d0" stroke-width="2"/><line x1="640.4" y1="1238" x2="640.4" y2="1245" stroke="#d0d0d0" stroke-width="2"/><line x1="707.7" y1="1238" x2="707.7" y2="1245" stroke="#d0d0d0" stroke-width="2"/><line x1="775.0" y1="1238" x2="775.0" y2="1245" stroke="#d0d0d0" stroke-width="2"/><line x1="842.3" y1="1238" x2="842.3" y2="1245" stroke="#d0d0d0" stroke-width="2"/><line x1="909.6" y1="1238" x2="909.6" y2="1245" stroke="#d0d0d0" stroke-width="2"/><rect x="784.5" y="1105" width="18.5" height="18.5" fill="#fff" stroke="#000" stroke-width="2.6"/><circle cx="765" cy="1108.4" r="6.2" fill="#1c1c1c" stroke="#000" stroke-width="1.2"/><circle cx="792.5" cy="1084.5" r="6.2" fill="#333" stroke="#000" stroke-width="1.2"/><circle cx="796" cy="1078.5" r="6.2" fill="#4d4d4d" stroke="#000" stroke-width="1.2"/><circle cx="797.5" cy="1075.5" r="6.2" fill="#666" stroke="#000" stroke-width="1.2"/><circle cx="786" cy="1091.5" r="6.2" fill="#808080" stroke="#000" stroke-width="1.2"/><circle cx="783.5" cy="1096" r="6.2" fill="#999" stroke="#000" stroke-width="1.2"/><circle cx="781.5" cy="1100.5" r="6.2" fill="#b3b3b3" stroke="#000" stroke-width="1.2"/><circle cx="780" cy="1104.5" r="6.2" fill="#ccc" stroke="#000" stroke-width="1.2"/><circle cx="778.2" cy="1109.3" r="6.2" fill="#e6e6e6" stroke="#000" stroke-width="1.2"/><circle cx="785.8" cy="1105.2" r="6.2" fill="#fff" stroke="#000" stroke-width="1.2"/></svg>
<div class="a" style="left:987px;top:960px;width:1234px;height:296.3px;background:#111"></div>
<div class="a" style="left:989px;top:962px;width:1230px;height:40px;background:linear-gradient(#2e2e2e 50%,#121212 50%)"></div>
<div class="a" style="left:989px;top:1001.4px;width:1230px;height:36.5px;background:#3f3f3f"></div>
<div class="a" style="left:989px;top:1037.8px;width:1230px;height:36.5px;background:#858585"></div>
<div class="a" style="left:989px;top:1074.2px;width:1230px;height:36.5px;background:#3f3f3f"></div>
<div class="a" style="left:989px;top:1110.7px;width:1230px;height:36.5px;background:#858585"></div>
<div class="a" style="left:989px;top:1147.1px;width:1230px;height:36.5px;background:#3f3f3f"></div>
<div class="a" style="left:989px;top:1183.5px;width:1230px;height:36.5px;background:#858585"></div>
<div class="a" style="left:989px;top:1219.9px;width:1230px;height:36.5px;background:#3f3f3f"></div>
<div class="a" style="left:0;top:1284px;width:2549px;height:96px;background:#262626"></div>
<div class="a" style="left:2.0px;top:1287px;width:185px;height:91px;border-radius:6px;border:1px solid #9a9a9a;border-bottom-color:#555;background:linear-gradient(#a8a8a8,#8a8a8a 20%,#6e6e6e 60%,#5c5c5c)"></div>
<div class="a" style="left:9.5px;top:1295px;width:170px;height:53.5px;border-radius:6px;background:#000;box-shadow:inset 0 2px 1px rgba(0,0,0,0.28),0 0 0 1px rgba(0,0,0,0.12)"></div>
<div class="a" style="left:190.3px;top:1287px;width:185px;height:91px;border-radius:6px;border:1px solid #9a9a9a;border-bottom-color:#555;background:linear-gradient(#a8a8a8,#8a8a8a 20%,#6e6e6e 60%,#5c5c5c)"></div>
<div class="a" style="left:197.8px;top:1295px;width:170px;height:53.5px;border-radius:6px;background:#1b1b1b;box-shadow:inset 0 2px 1px rgba(0,0,0,0.28),0 0 0 1px rgba(0,0,0,0.12)"></div>
<div class="a" style="left:378.6px;top:1287px;width:185px;height:91px;border-radius:6px;border:1px solid #9a9a9a;border-bottom-color:#555;background:linear-gradient(#a8a8a8,#8a8a8a 20%,#6e6e6e 60%,#5c5c5c)"></div>
<div class="a" style="left:386.1px;top:1295px;width:170px;height:53.5px;border-radius:6px;background:#333;box-shadow:inset 0 2px 1px rgba(0,0,0,0.28),0 0 0 1px rgba(0,0,0,0.12)"></div>
<div class="a" style="left:566.9px;top:1287px;width:185px;height:91px;border-radius:6px;border:1px solid #9a9a9a;border-bottom-color:#555;background:linear-gradient(#a8a8a8,#8a8a8a 20%,#6e6e6e 60%,#5c5c5c)"></div>
<div class="a" style="left:574.4px;top:1295px;width:170px;height:53.5px;border-radius:6px;background:#4c4c4c;box-shadow:inset 0 2px 1px rgba(0,0,0,0.28),0 0 0 1px rgba(0,0,0,0.12)"></div>
<div class="a" style="left:755.2px;top:1287px;width:185px;height:91px;border-radius:6px;border:1px solid #9a9a9a;border-bottom-color:#555;background:linear-gradient(#a8a8a8,#8a8a8a 20%,#6e6e6e 60%,#5c5c5c)"></div>
<div class="a" style="left:762.7px;top:1295px;width:170px;height:53.5px;border-radius:6px;background:#666;box-shadow:inset 0 2px 1px rgba(0,0,0,0.28),0 0 0 1px rgba(0,0,0,0.12)"></div>
<div class="a" style="left:943.5px;top:1287px;width:185px;height:91px;border-radius:6px;border:1px solid #9a9a9a;border-bottom-color:#555;background:linear-gradient(#a8a8a8,#8a8a8a 20%,#6e6e6e 60%,#5c5c5c)"></div>
<div class="a" style="left:951.0px;top:1295px;width:170px;height:53.5px;border-radius:6px;background:#808080;box-shadow:inset 0 2px 1px rgba(0,0,0,0.28),0 0 0 1px rgba(0,0,0,0.12)"></div>
<div class="a" style="left:1131.8px;top:1287px;width:185px;height:91px;border-radius:6px;border:1px solid #9a9a9a;border-bottom-color:#555;background:linear-gradient(#a8a8a8,#8a8a8a 20%,#6e6e6e 60%,#5c5c5c)"></div>
<div class="a" style="left:1139.3px;top:1295px;width:170px;height:53.5px;border-radius:6px;background:#999;box-shadow:inset 0 2px 1px rgba(0,0,0,0.28),0 0 0 1px rgba(0,0,0,0.12)"></div>
<div class="a" style="left:1320.1px;top:1287px;width:185px;height:91px;border-radius:6px;border:1px solid #9a9a9a;border-bottom-color:#555;background:linear-gradient(#a8a8a8,#8a8a8a 20%,#6e6e6e 60%,#5c5c5c)"></div>
<div class="a" style="left:1327.6px;top:1295px;width:170px;height:53.5px;border-radius:6px;background:#b3b3b3;box-shadow:inset 0 2px 1px rgba(0,0,0,0.28),0 0 0 1px rgba(0,0,0,0.12)"></div>
<div class="a" style="left:1508.4px;top:1287px;width:185px;height:91px;border-radius:6px;border:1px solid #9a9a9a;border-bottom-color:#555;background:linear-gradient(#a8a8a8,#8a8a8a 20%,#6e6e6e 60%,#5c5c5c)"></div>
<div class="a" style="left:1515.9px;top:1295px;width:170px;height:53.5px;border-radius:6px;background:#cdcdcd;box-shadow:inset 0 2px 1px rgba(0,0,0,0.28),0 0 0 1px rgba(0,0,0,0.12)"></div>
<div class="a" style="left:1696.7px;top:1287px;width:185px;height:91px;border-radius:6px;border:1px solid #9a9a9a;border-bottom-color:#555;background:linear-gradient(#a8a8a8,#8a8a8a 20%,#6e6e6e 60%,#5c5c5c)"></div>
<div class="a" style="left:1704.2px;top:1295px;width:170px;height:53.5px;border-radius:6px;background:#e6e6e6;box-shadow:inset 0 2px 1px rgba(0,0,0,0.28),0 0 0 1px rgba(0,0,0,0.12)"></div>
<div class="a" style="left:1885.0px;top:1287px;width:185px;height:91px;border-radius:6px;background:linear-gradient(#1a1a1a,#262626 40%,#353535)"></div>
<div class="a" style="left:1892.0px;top:1294px;width:171px;height:54px;border-radius:6px;background:#fff;border:1.5px solid #888"></div>
<div class="a" style="left:2075px;top:1287px;width:73px;height:93px;border-radius:6px 6px 0 0;background:linear-gradient(#a8a8a8,#7a7a7a 30%,#8a8a8a 35%,#6a6a6a)"></div>
<div class="a" style="left:2075px;top:1314px;width:73px;height:2px;background:#333"></div>
<div class="a" style="left:2100px;top:1290px;width:23px;height:23px;border-radius:50%;background:linear-gradient(#777,#999)"></div>
<svg class="a" style="left:2100px;top:1292px" width="24" height="14"><path d="M5 11 L12 4.5 L19 11 Z" fill="#333"/></svg>
<div class="a" style="left:2088px;top:1323.5px;width:47px;height:46px;border-radius:7px;border:3px solid #262626;background:linear-gradient(#b5b5b5 50%,#8f8f8f 50%)"></div>
<div class="a" style="left:2101px;top:1337px;width:21px;height:20px;background:linear-gradient(#1e1e1e 50%,#000 50%)"></div>
<div class="a" style="left:2149px;top:1287px;width:339px;height:45px;background:linear-gradient(#b0b0b0,#8a8a8a 55%,#6e6e6e)"></div>
<div class="a" style="left:2488px;top:1287px;width:61px;height:45px;background:#262626"></div>
<div class="a" style="left:2509px;top:1294px;width:30px;height:30px;border-radius:50%;background:#2e2e2e"></div>
<div class="a" style="left:2218px;top:1287px;width:2px;height:45px;background:#2a2a2a"></div>
<div class="a" style="left:2286px;top:1287px;width:2px;height:45px;background:#2a2a2a"></div>
<div class="a" style="left:2353px;top:1287px;width:2px;height:45px;background:#2a2a2a"></div>
<div class="a" style="left:2421px;top:1287px;width:2px;height:45px;background:#2a2a2a"></div>
<div class="a" style="left:2169.2px;top:1294.5px;width:29px;height:29px;border-radius:50%;background:linear-gradient(#727272,#8e8e8e 45%,#a8a8a8 80%,#b0b0b0)"></div>
<div class="a" style="left:2237.3px;top:1294.5px;width:29px;height:29px;border-radius:50%;background:linear-gradient(#727272,#8e8e8e 45%,#a8a8a8 80%,#b0b0b0)"></div>
<div class="a" style="left:2305.5px;top:1294.5px;width:29px;height:29px;border-radius:50%;background:linear-gradient(#727272,#8e8e8e 45%,#a8a8a8 80%,#b0b0b0)"></div>
<div class="a" style="left:2372.5px;top:1294.5px;width:29px;height:29px;border-radius:50%;background:linear-gradient(#727272,#8e8e8e 45%,#a8a8a8 80%,#b0b0b0)"></div>
<div class="a" style="left:2440.1px;top:1294.5px;width:29px;height:29px;border-radius:50%;background:linear-gradient(#727272,#8e8e8e 45%,#a8a8a8 80%,#b0b0b0)"></div>
<svg class="a" style="left:2149px;top:1287px" width="339" height="45"><rect x="28.5" y="16.8" width="12" height="11" fill="#2a2a2a"/><path d="M99.4 16.8 L111.3 23.5 L99.4 30.2 Z" fill="#2a2a2a"/><path d="M166.5 17 h-3 v13.5 h3 M175.5 17 h3 v13.5 h-3" fill="none" stroke="#2a2a2a" stroke-width="3"/><rect x="166.8" y="21.3" width="2.5" height="2.5" fill="#2a2a2a"/><rect x="171.5" y="21.3" width="2.5" height="2.5" fill="#2a2a2a"/><ellipse cx="234.3" cy="22.6" rx="4.4" ry="3.2" fill="none" stroke="#2a2a2a" stroke-width="2.3"/><ellipse cx="242.9" cy="22.6" rx="4.4" ry="3.2" fill="none" stroke="#2a2a2a" stroke-width="2.3"/><path d="M300.2 25.8 A6.4 6.4 0 0 1 310.8 19" fill="none" stroke="#2a2a2a" stroke-width="2.8"/><path d="M313.8 15.5 L314.5 23 L307.5 21.2 Z" fill="#2a2a2a"/><path d="M312.4 22 A6.4 6.4 0 0 1 301.8 28.8" fill="none" stroke="#2a2a2a" stroke-width="2.8"/><path d="M298.8 32.3 L298.1 24.8 L305.1 26.6 Z" fill="#2a2a2a"/></svg>
<div class="a" style="left:2149px;top:1333px;width:400px;height:47px;background:linear-gradient(#b0b0b0,#8c8c8c 55%,#727272)"></div>
<div class="a" style="left:2352px;top:1333px;width:2px;height:47px;background:#2a2a2a"></div>
<div class="a" style="left:2180.3px;top:1341.5px;width:29.4px;height:29.4px;border-radius:50%;background:linear-gradient(#727272,#8e8e8e 45%,#a8a8a8 80%,#b0b0b0)"></div>
<div class="a" style="left:2499.5px;top:1341.5px;width:29.4px;height:29.4px;border-radius:50%;background:linear-gradient(#727272,#8e8e8e 45%,#a8a8a8 80%,#b0b0b0)"></div>
<svg class="a" style="left:2180px;top:1341px" width="360" height="30"><path d="M14 9 L9 15.5 L14 22 M20 9 L15 15.5 L20 22" fill="none" stroke="#333" stroke-width="2.2"/><path d="M336.5 9 L341.5 15.5 L336.5 22 M330.5 9 L335.5 15.5 L330.5 22" fill="none" stroke="#333" stroke-width="2.2"/></svg>
<div class="a" style="left:0;top:1284px;width:2px;height:96px;background:#1a1a1a"></div>
<svg class="a" style="left:0;top:0;pointer-events:none" width="2549" height="1380" font-family='"Liberation Sans", sans-serif'><text x="32.00" y="24.00" font-size="18" font-weight="normal" fill="#000" letter-spacing="-0.212">Calman 2025 Calman Ultimate for Business 69 Days Remaining  - Untitled</text><text x="52.60" y="117.00" font-size="18" font-weight="normal" fill="#e8e8e8" letter-spacing="-0.063">History 1</text><text x="1718.00" y="103.80" font-size="15.5" font-weight="normal" fill="#f2f2f2" letter-spacing="0.165">X-Rite i1Pro 2</text><text x="1717.20" y="125.50" font-size="15.5" font-weight="normal" fill="#f2f2f2" letter-spacing="0.490">Direct View</text><text x="1885.05" y="113.90" font-size="12.5" font-weight="normal" fill="#fff" letter-spacing="0.498">238</text><text x="1941.80" y="104.00" font-size="15.5" font-weight="normal" fill="#f2f2f2" letter-spacing="0.341">CalMAN Client 3 Pattern Generator</text><text x="2262.20" y="104.00" font-size="15.5" font-weight="normal" fill="#f2f2f2" letter-spacing="0.408">Direct Display Control</text><text x="134.50" y="215.50" font-size="55" font-weight="normal" fill="#f2f2f2" letter-spacing="-1.187">Grayscale</text><text x="129.20" y="317.52" font-size="20.5" font-weight="normal" fill="#dcdcdc" letter-spacing="0.000">100</text><text x="140.60" y="349.57" font-size="20.5" font-weight="normal" fill="#dcdcdc" letter-spacing="0.000">90</text><text x="140.60" y="381.61" font-size="20.5" font-weight="normal" fill="#dcdcdc" letter-spacing="0.000">80</text><text x="140.60" y="413.66" font-size="20.5" font-weight="normal" fill="#dcdcdc" letter-spacing="0.000">70</text><text x="140.60" y="445.70" font-size="20.5" font-weight="normal" fill="#dcdcdc" letter-spacing="0.000">60</text><text x="140.60" y="477.75" font-size="20.5" font-weight="normal" fill="#dcdcdc" letter-spacing="0.000">50</text><text x="140.60" y="509.80" font-size="20.5" font-weight="normal" fill="#dcdcdc" letter-spacing="0.000">40</text><text x="140.60" y="541.84" font-size="20.5" font-weight="normal" fill="#dcdcdc" letter-spacing="0.000">30</text><text x="140.60" y="573.89" font-size="20.5" font-weight="normal" fill="#dcdcdc" letter-spacing="0.000">20</text><text x="140.60" y="605.93" font-size="20.5" font-weight="normal" fill="#dcdcdc" letter-spacing="0.000">10</text><text x="152.00" y="637.98" font-size="20.5" font-weight="normal" fill="#dcdcdc" letter-spacing="0.000">0</text><text x="159.00" y="677.00" font-size="20.5" font-weight="normal" fill="#dcdcdc" letter-spacing="0.000">0</text><text x="216.71" y="677.00" font-size="20.5" font-weight="normal" fill="#dcdcdc" letter-spacing="0.000">2</text><text x="275.43" y="677.00" font-size="20.5" font-weight="normal" fill="#dcdcdc" letter-spacing="0.000">4</text><text x="333.14" y="677.00" font-size="20.5" font-weight="normal" fill="#dcdcdc" letter-spacing="0.000">6</text><text x="391.86" y="677.00" font-size="20.5" font-weight="normal" fill="#dcdcdc" letter-spacing="0.000">8</text><text x="443.87" y="677.00" font-size="20.5" font-weight="normal" fill="#dcdcdc" letter-spacing="0.000">10</text><text x="502.09" y="677.00" font-size="20.5" font-weight="normal" fill="#dcdcdc" letter-spacing="0.000">12</text><text x="560.30" y="677.00" font-size="20.5" font-weight="normal" fill="#dcdcdc" letter-spacing="0.000">14</text><text x="310.70" y="285.70" font-size="20.5" font-weight="normal" fill="#dcdcdc" letter-spacing="-0.093">DeltaE 2000</text><text x="669.10" y="654.00" font-size="20.5" font-weight="normal" fill="#dcdcdc" letter-spacing="0.000">80</text><text x="669.10" y="599.00" font-size="20.5" font-weight="normal" fill="#dcdcdc" letter-spacing="0.000">85</text><text x="669.10" y="542.90" font-size="20.5" font-weight="normal" fill="#dcdcdc" letter-spacing="0.000">90</text><text x="669.10" y="487.20" font-size="20.5" font-weight="normal" fill="#dcdcdc" letter-spacing="0.000">95</text><text x="657.70" y="431.00" font-size="20.5" font-weight="normal" fill="#dcdcdc" letter-spacing="0.000">100</text><text x="657.70" y="373.80" font-size="20.5" font-weight="normal" fill="#dcdcdc" letter-spacing="0.000">105</text><text x="659.22" y="317.70" font-size="20.5" font-weight="normal" fill="#dcdcdc" letter-spacing="0.000">110</text><text x="659.22" y="261.80" font-size="20.5" font-weight="normal" fill="#dcdcdc" letter-spacing="0.000">115</text><text x="657.70" y="206.00" font-size="20.5" font-weight="normal" fill="#dcdcdc" letter-spacing="0.000">120</text><text x="697.00" y="677.00" font-size="20.5" font-weight="normal" fill="#dcdcdc" letter-spacing="0.000">0</text><text x="771.24" y="677.00" font-size="20.5" font-weight="normal" fill="#dcdcdc" letter-spacing="0.000">10</text><text x="851.68" y="677.00" font-size="20.5" font-weight="normal" fill="#dcdcdc" letter-spacing="0.000">20</text><text x="932.62" y="677.00" font-size="20.5" font-weight="normal" fill="#dcdcdc" letter-spacing="0.000">30</text><text x="1013.06" y="677.00" font-size="20.5" font-weight="normal" fill="#dcdcdc" letter-spacing="0.000">40</text><text x="1093.50" y="677.00" font-size="20.5" font-weight="normal" fill="#dcdcdc" letter-spacing="0.000">50</text><text x="1173.44" y="677.00" font-size="20.5" font-weight="normal" fill="#dcdcdc" letter-spacing="0.000">60</text><text x="1253.88" y="677.00" font-size="20.5" font-weight="normal" fill="#dcdcdc" letter-spacing="0.000">70</text><text x="1334.82" y="677.00" font-size="20.5" font-weight="normal" fill="#dcdcdc" letter-spacing="0.000">80</text><text x="1415.26" y="677.00" font-size="20.5" font-weight="normal" fill="#dcdcdc" letter-spacing="0.000">90</text><text x="1489.50" y="677.00" font-size="20.5" font-weight="normal" fill="#dcdcdc" letter-spacing="0.000">100</text><text x="1024.00" y="189.90" font-size="20.5" font-weight="normal" fill="#dcdcdc" letter-spacing="-0.650">RGB Balance</text><text x="1578.50" y="648.90" font-size="20.5" font-weight="normal" fill="#dcdcdc" letter-spacing="0.000">1</text><text x="1561.40" y="592.90" font-size="20.5" font-weight="normal" fill="#dcdcdc" letter-spacing="0.000">1,2</text><text x="1561.40" y="537.20" font-size="20.5" font-weight="normal" fill="#dcdcdc" letter-spacing="0.000">1,4</text><text x="1561.40" y="479.80" font-size="20.5" font-weight="normal" fill="#dcdcdc" letter-spacing="0.000">1,6</text><text x="1561.40" y="423.80" font-size="20.5" font-weight="normal" fill="#dcdcdc" letter-spacing="0.000">1,8</text><text x="1578.50" y="368.00" font-size="20.5" font-weight="normal" fill="#dcdcdc" letter-spacing="0.000">2</text><text x="1561.40" y="312.20" font-size="20.5" font-weight="normal" fill="#dcdcdc" letter-spacing="0.000">2,2</text><text x="1561.40" y="256.70" font-size="20.5" font-weight="normal" fill="#dcdcdc" letter-spacing="0.000">2,4</text><text x="1594.50" y="677.00" font-size="20.5" font-weight="normal" fill="#dcdcdc" letter-spacing="0.000">0</text><text x="1669.40" y="677.00" font-size="20.5" font-weight="normal" fill="#dcdcdc" letter-spacing="0.000">10</text><text x="1750.50" y="677.00" font-size="20.5" font-weight="normal" fill="#dcdcdc" letter-spacing="0.000">20</text><text x="1832.10" y="677.00" font-size="20.5" font-weight="normal" fill="#dcdcdc" letter-spacing="0.000">30</text><text x="1913.20" y="677.00" font-size="20.5" font-weight="normal" fill="#dcdcdc" letter-spacing="0.000">40</text><text x="1994.30" y="677.00" font-size="20.5" font-weight="normal" fill="#dcdcdc" letter-spacing="0.000">50</text><text x="2074.90" y="677.00" font-size="20.5" font-weight="normal" fill="#dcdcdc" letter-spacing="0.000">60</text><text x="2156.00" y="677.00" font-size="20.5" font-weight="normal" fill="#dcdcdc" letter-spacing="0.000">70</text><text x="2237.60" y="677.00" font-size="20.5" font-weight="normal" fill="#dcdcdc" letter-spacing="0.000">80</text><text x="2318.70" y="677.00" font-size="20.5" font-weight="normal" fill="#dcdcdc" letter-spacing="0.000">90</text><text x="2393.60" y="677.00" font-size="20.5" font-weight="normal" fill="#dcdcdc" letter-spacing="0.000">100</text><text x="1909.50" y="189.90" font-size="20.5" font-weight="normal" fill="#dcdcdc" letter-spacing="0.100">Gamma Log/Log</text><text x="222.90" y="735.80" font-size="41.5" font-weight="normal" fill="#f0f0f0" letter-spacing="-0.053">Avg dE2000: 2,9</text><text x="804.10" y="735.60" font-size="41.5" font-weight="normal" fill="#f0f0f0" letter-spacing="-0.707">Avg CCT: 6547</text><text x="1332.80" y="735.50" font-size="41.5" font-weight="normal" fill="#f0f0f0" letter-spacing="0.555">Contrast Ratio: 2059</text><text x="1941.00" y="735.50" font-size="41.5" font-weight="normal" fill="#f0f0f0" letter-spacing="0.611">Total Gamma: 2,04</text><text x="542.50" y="936.40" font-size="15.5" font-weight="normal" fill="#fff" letter-spacing="0.000">0</text><text x="700.19" y="936.40" font-size="15.5" font-weight="normal" fill="#fff" letter-spacing="0.000">10</text><text x="863.19" y="936.40" font-size="15.5" font-weight="normal" fill="#fff" letter-spacing="0.000">20</text><text x="1025.69" y="936.40" font-size="15.5" font-weight="normal" fill="#fff" letter-spacing="0.000">30</text><text x="1188.19" y="936.40" font-size="15.5" font-weight="normal" fill="#fff" letter-spacing="0.000">40</text><text x="1350.69" y="936.40" font-size="15.5" font-weight="normal" fill="#fff" letter-spacing="0.000">50</text><text x="1513.19" y="936.40" font-size="15.5" font-weight="normal" fill="#fff" letter-spacing="0.000">60</text><text x="1675.69" y="936.40" font-size="15.5" font-weight="normal" fill="#fff" letter-spacing="0.000">70</text><text x="1838.19" y="936.40" font-size="15.5" font-weight="normal" fill="#fff" letter-spacing="0.000">80</text><text x="2000.69" y="936.40" font-size="15.5" font-weight="normal" fill="#fff" letter-spacing="0.000">90</text><text x="2158.38" y="936.40" font-size="15.5" font-weight="normal" fill="#fff" letter-spacing="0.000">100</text><text transform="translate(467.00,827.50) rotate(-90)" font-size="18" font-weight="normal" fill="#eee" letter-spacing="-0.206">Actual</text><text transform="translate(467.00,908.80) rotate(-90)" font-size="18" font-weight="normal" fill="#eee" letter-spacing="-0.405">Target</text><text x="120.30" y="1023.80" font-size="40.5" font-weight="normal" fill="#f0f0f0" letter-spacing="1.154">Current Reading</text><text x="122.00" y="1083.80" font-size="34.5" font-weight="normal" fill="#f0f0f0" letter-spacing="0.663">x: 0,3115</text><text x="122.00" y="1142.20" font-size="34.5" font-weight="normal" fill="#f0f0f0" letter-spacing="0.390">y: 0,331</text><text x="122.00" y="1199.00" font-size="34.5" font-weight="normal" fill="#f0f0f0" letter-spacing="0.347">fL: 123,89</text><text x="121.00" y="1257.30" font-size="34.5" font-weight="normal" fill="#f0f0f0" letter-spacing="1.270">cd/m²: 424,49</text><text x="577.40" y="1020.80" font-size="20.5" font-weight="normal" fill="#dcdcdc" letter-spacing="-0.166">0,35</text><text x="577.40" y="1069.80" font-size="20.5" font-weight="normal" fill="#dcdcdc" letter-spacing="-0.166">0,34</text><text x="577.40" y="1118.80" font-size="20.5" font-weight="normal" fill="#dcdcdc" letter-spacing="-0.166">0,33</text><text x="577.40" y="1167.80" font-size="20.5" font-weight="normal" fill="#dcdcdc" letter-spacing="-0.166">0,32</text><text x="577.40" y="1216.80" font-size="20.5" font-weight="normal" fill="#dcdcdc" letter-spacing="-0.166">0,31</text><text x="621.00" y="1267.00" font-size="20" font-weight="normal" fill="#dcdcdc" letter-spacing="0.000">0,29</text><text x="693.86" y="1267.00" font-size="20" font-weight="normal" fill="#dcdcdc" letter-spacing="0.000">0,3</text><text x="755.60" y="1267.00" font-size="20" font-weight="normal" fill="#dcdcdc" letter-spacing="0.000">0,31</text><text x="822.90" y="1267.00" font-size="20" font-weight="normal" fill="#dcdcdc" letter-spacing="0.000">0,32</text><text x="890.20" y="1267.00" font-size="20" font-weight="normal" fill="#dcdcdc" letter-spacing="0.000">0,33</text><text x="1249.90" y="990.10" font-size="21" font-weight="normal" fill="#fff" letter-spacing="0.000">0</text><text x="1341.46" y="990.10" font-size="21" font-weight="normal" fill="#fff" letter-spacing="0.000">10</text><text x="1432.66" y="990.10" font-size="21" font-weight="normal" fill="#fff" letter-spacing="0.000">20</text><text x="1524.16" y="990.10" font-size="21" font-weight="normal" fill="#fff" letter-spacing="0.000">30</text><text x="1615.06" y="990.10" font-size="21" font-weight="normal" fill="#fff" letter-spacing="0.000">40</text><text x="1706.66" y="990.10" font-size="21" font-weight="normal" fill="#fff" letter-spacing="0.000">50</text><text x="1797.06" y="990.10" font-size="21" font-weight="normal" fill="#fff" letter-spacing="0.000">60</text><text x="1888.66" y="990.10" font-size="21" font-weight="normal" fill="#fff" letter-spacing="0.000">70</text><text x="1979.86" y="990.10" font-size="21" font-weight="normal" fill="#fff" letter-spacing="0.000">80</text><text x="2070.66" y="990.10" font-size="21" font-weight="normal" fill="#fff" letter-spacing="0.000">90</text><text x="2156.02" y="990.10" font-size="21" font-weight="normal" fill="#fff" letter-spacing="0.000">100</text><text x="1006.30" y="1028.80" font-size="22" font-weight="bold" fill="#f4f4f4" letter-spacing="-0.369">x: CIE31</text><text x="1209.70" y="1028.80" font-size="22" font-weight="normal" fill="#f4f4f4" letter-spacing="0.000">0,26</text><text x="1313.40" y="1028.80" font-size="22" font-weight="normal" fill="#f4f4f4" letter-spacing="0.000">0,31</text><text x="1404.70" y="1028.80" font-size="22" font-weight="normal" fill="#f4f4f4" letter-spacing="0.000">0,31</text><text x="1496.00" y="1028.80" font-size="22" font-weight="normal" fill="#f4f4f4" letter-spacing="0.000">0,31</text><text x="1587.30" y="1028.80" font-size="22" font-weight="normal" fill="#f4f4f4" letter-spacing="0.000">0,31</text><text x="1678.60" y="1028.80" font-size="22" font-weight="normal" fill="#f4f4f4" letter-spacing="0.000">0,31</text><text x="1769.90" y="1028.80" font-size="22" font-weight="normal" fill="#f4f4f4" letter-spacing="0.000">0,31</text><text x="1861.20" y="1028.80" font-size="22" font-weight="normal" fill="#f4f4f4" letter-spacing="0.000">0,31</text><text x="1952.50" y="1028.80" font-size="22" font-weight="normal" fill="#f4f4f4" letter-spacing="0.000">0,31</text><text x="2043.80" y="1028.80" font-size="22" font-weight="normal" fill="#f4f4f4" letter-spacing="0.000">0,31</text><text x="2135.10" y="1028.80" font-size="22" font-weight="normal" fill="#f4f4f4" letter-spacing="0.000">0,31</text><text x="1006.30" y="1065.22" font-size="22" font-weight="bold" fill="#f4f4f4" letter-spacing="-0.369">y: CIE31</text><text x="1209.70" y="1065.22" font-size="22" font-weight="normal" fill="#f4f4f4" letter-spacing="0.000">0,27</text><text x="1313.40" y="1065.22" font-size="22" font-weight="normal" fill="#f4f4f4" letter-spacing="0.000">0,33</text><text x="1404.70" y="1065.22" font-size="22" font-weight="normal" fill="#f4f4f4" letter-spacing="0.000">0,34</text><text x="1496.00" y="1065.22" font-size="22" font-weight="normal" fill="#f4f4f4" letter-spacing="0.000">0,34</text><text x="1587.30" y="1065.22" font-size="22" font-weight="normal" fill="#f4f4f4" letter-spacing="0.000">0,34</text><text x="1678.60" y="1065.22" font-size="22" font-weight="normal" fill="#f4f4f4" letter-spacing="0.000">0,33</text><text x="1769.90" y="1065.22" font-size="22" font-weight="normal" fill="#f4f4f4" letter-spacing="0.000">0,33</text><text x="1861.20" y="1065.22" font-size="22" font-weight="normal" fill="#f4f4f4" letter-spacing="0.000">0,33</text><text x="1952.50" y="1065.22" font-size="22" font-weight="normal" fill="#f4f4f4" letter-spacing="0.000">0,33</text><text x="2043.80" y="1065.22" font-size="22" font-weight="normal" fill="#f4f4f4" letter-spacing="0.000">0,33</text><text x="2135.10" y="1065.22" font-size="22" font-weight="normal" fill="#f4f4f4" letter-spacing="0.000">0,33</text><text x="1006.30" y="1101.64" font-size="22" font-weight="bold" fill="#f4f4f4" letter-spacing="0.000">Y</text><text x="1209.70" y="1101.64" font-size="22" font-weight="normal" fill="#f4f4f4" letter-spacing="0.000">0,21</text><text x="1313.40" y="1101.64" font-size="22" font-weight="normal" fill="#f4f4f4" letter-spacing="0.000">3,16</text><text x="1403.70" y="1101.64" font-size="22" font-weight="normal" fill="#f4f4f4" letter-spacing="0.000">13,74</text><text x="1496.00" y="1101.64" font-size="22" font-weight="normal" fill="#f4f4f4" letter-spacing="0.000">33,97</text><text x="1586.30" y="1101.64" font-size="22" font-weight="normal" fill="#f4f4f4" letter-spacing="0.000">65,44</text><text x="1677.60" y="1101.64" font-size="22" font-weight="normal" fill="#f4f4f4" letter-spacing="0.000">104,84</text><text x="1768.90" y="1101.64" font-size="22" font-weight="normal" fill="#f4f4f4" letter-spacing="0.000">150,66</text><text x="1860.20" y="1101.64" font-size="22" font-weight="normal" fill="#f4f4f4" letter-spacing="0.000">204,76</text><text x="1951.50" y="1101.64" font-size="22" font-weight="normal" fill="#f4f4f4" letter-spacing="0.000">272,46</text><text x="2043.80" y="1101.64" font-size="22" font-weight="normal" fill="#f4f4f4" letter-spacing="0.000">349,37</text><text x="2135.10" y="1101.64" font-size="22" font-weight="normal" fill="#f4f4f4" letter-spacing="0.000">424,49</text><text x="1006.30" y="1138.06" font-size="22" font-weight="bold" fill="#f4f4f4" letter-spacing="0.155">Target Y</text><text x="1209.70" y="1138.06" font-size="22" font-weight="normal" fill="#f4f4f4" letter-spacing="0.000">0,00</text><text x="1313.40" y="1138.06" font-size="22" font-weight="normal" fill="#f4f4f4" letter-spacing="0.000">4,38</text><text x="1403.70" y="1138.06" font-size="22" font-weight="normal" fill="#f4f4f4" letter-spacing="0.000">14,05</text><text x="1496.00" y="1138.06" font-size="22" font-weight="normal" fill="#f4f4f4" letter-spacing="0.000">30,68</text><text x="1587.30" y="1138.06" font-size="22" font-weight="normal" fill="#f4f4f4" letter-spacing="0.000">56,40</text><text x="1677.60" y="1138.06" font-size="22" font-weight="normal" fill="#f4f4f4" letter-spacing="0.000">91,63</text><text x="1768.90" y="1138.06" font-size="22" font-weight="normal" fill="#f4f4f4" letter-spacing="0.000">135,22</text><text x="1860.20" y="1138.06" font-size="22" font-weight="normal" fill="#f4f4f4" letter-spacing="0.000">188,98</text><text x="1951.50" y="1138.06" font-size="22" font-weight="normal" fill="#f4f4f4" letter-spacing="0.000">256,32</text><text x="2043.80" y="1138.06" font-size="22" font-weight="normal" fill="#f4f4f4" letter-spacing="0.000">335,90</text><text x="2135.10" y="1138.06" font-size="22" font-weight="normal" fill="#f4f4f4" letter-spacing="0.000">424,49</text><text x="1006.30" y="1174.48" font-size="22" font-weight="bold" fill="#f4f4f4" letter-spacing="0.615">Gamma Log/Log</text><text x="1208.70" y="1174.48" font-size="22" font-weight="normal" fill="#f4f4f4" letter-spacing="0.000">1,28</text><text x="1312.40" y="1174.48" font-size="22" font-weight="normal" fill="#f4f4f4" letter-spacing="0.000">2,15</text><text x="1403.70" y="1174.48" font-size="22" font-weight="normal" fill="#f4f4f4" letter-spacing="0.000">2,13</text><text x="1495.00" y="1174.48" font-size="22" font-weight="normal" fill="#f4f4f4" letter-spacing="0.000">2,09</text><text x="1586.30" y="1174.48" font-size="22" font-weight="normal" fill="#f4f4f4" letter-spacing="0.000">2,04</text><text x="1677.60" y="1174.48" font-size="22" font-weight="normal" fill="#f4f4f4" letter-spacing="0.000">2,03</text><text x="1768.90" y="1174.48" font-size="22" font-weight="normal" fill="#f4f4f4" letter-spacing="0.000">2,03</text><text x="1860.20" y="1174.48" font-size="22" font-weight="normal" fill="#f4f4f4" letter-spacing="0.000">2,03</text><text x="1951.50" y="1174.48" font-size="22" font-weight="normal" fill="#f4f4f4" letter-spacing="0.000">1,99</text><text x="2042.80" y="1174.48" font-size="22" font-weight="normal" fill="#f4f4f4" letter-spacing="0.000">1,89</text><text x="2134.10" y="1174.48" font-size="22" font-weight="normal" fill="#f4f4f4" letter-spacing="0.000">2,27</text><text x="1006.30" y="1210.90" font-size="22" font-weight="bold" fill="#f4f4f4" letter-spacing="-2.388">CCT</text><text x="1208.70" y="1210.90" font-size="22" font-weight="normal" fill="#f4f4f4" letter-spacing="0.000">15600,00</text><text x="1312.40" y="1210.90" font-size="22" font-weight="normal" fill="#f4f4f4" letter-spacing="0.000">6724,00</text><text x="1403.70" y="1210.90" font-size="22" font-weight="normal" fill="#f4f4f4" letter-spacing="0.000">6457,00</text><text x="1495.00" y="1210.90" font-size="22" font-weight="normal" fill="#f4f4f4" letter-spacing="0.000">6397,00</text><text x="1586.30" y="1210.90" font-size="22" font-weight="normal" fill="#f4f4f4" letter-spacing="0.000">6414,00</text><text x="1677.60" y="1210.90" font-size="22" font-weight="normal" fill="#f4f4f4" letter-spacing="0.000">6522,00</text><text x="1768.90" y="1210.90" font-size="22" font-weight="normal" fill="#f4f4f4" letter-spacing="0.000">6561,00</text><text x="1860.20" y="1210.90" font-size="22" font-weight="normal" fill="#f4f4f4" letter-spacing="0.000">6599,00</text><text x="1951.50" y="1210.90" font-size="22" font-weight="normal" fill="#f4f4f4" letter-spacing="0.000">6621,00</text><text x="2042.80" y="1210.90" font-size="22" font-weight="normal" fill="#f4f4f4" letter-spacing="0.000">6621,00</text><text x="2134.10" y="1210.90" font-size="22" font-weight="normal" fill="#f4f4f4" letter-spacing="0.000">6554,00</text><text x="1006.30" y="1247.32" font-size="22" font-weight="bold" fill="#f4f4f4" letter-spacing="0.283">ΔE 2000</text><text x="1209.70" y="1247.32" font-size="22" font-weight="normal" fill="#f4f4f4" letter-spacing="0.000">0,55</text><text x="1312.40" y="1247.32" font-size="22" font-weight="normal" fill="#f4f4f4" letter-spacing="0.000">1,72</text><text x="1403.70" y="1247.32" font-size="22" font-weight="normal" fill="#f4f4f4" letter-spacing="0.000">1,75</text><text x="1495.00" y="1247.32" font-size="22" font-weight="normal" fill="#f4f4f4" letter-spacing="0.000">2,88</text><text x="1587.30" y="1247.32" font-size="22" font-weight="normal" fill="#f4f4f4" letter-spacing="0.000">4,12</text><text x="1678.60" y="1247.32" font-size="22" font-weight="normal" fill="#f4f4f4" letter-spacing="0.000">4,04</text><text x="1769.90" y="1247.32" font-size="22" font-weight="normal" fill="#f4f4f4" letter-spacing="0.000">3,62</text><text x="1861.20" y="1247.32" font-size="22" font-weight="normal" fill="#f4f4f4" letter-spacing="0.000">3,16</text><text x="1951.50" y="1247.32" font-size="22" font-weight="normal" fill="#f4f4f4" letter-spacing="0.000">2,90</text><text x="2042.80" y="1247.32" font-size="22" font-weight="normal" fill="#f4f4f4" letter-spacing="0.000">2,63</text><text x="2134.10" y="1247.32" font-size="22" font-weight="normal" fill="#f4f4f4" letter-spacing="0.000">2,41</text><text x="90.50" y="1371.60" font-size="14.5" font-weight="bold" fill="#262626" letter-spacing="0.000">0</text><text x="274.15" y="1371.60" font-size="14.5" font-weight="bold" fill="#262626" letter-spacing="1.236">10</text><text x="462.45" y="1371.60" font-size="14.5" font-weight="bold" fill="#262626" letter-spacing="1.236">20</text><text x="650.75" y="1371.60" font-size="14.5" font-weight="bold" fill="#262626" letter-spacing="1.236">30</text><text x="839.05" y="1371.60" font-size="14.5" font-weight="bold" fill="#262626" letter-spacing="1.236">40</text><text x="1027.35" y="1371.60" font-size="14.5" font-weight="bold" fill="#262626" letter-spacing="1.236">50</text><text x="1215.65" y="1371.60" font-size="14.5" font-weight="bold" fill="#262626" letter-spacing="1.236">60</text><text x="1403.95" y="1371.60" font-size="14.5" font-weight="bold" fill="#262626" letter-spacing="1.236">70</text><text x="1592.25" y="1371.60" font-size="14.5" font-weight="bold" fill="#262626" letter-spacing="1.236">80</text><text x="1780.55" y="1371.60" font-size="14.5" font-weight="bold" fill="#262626" letter-spacing="1.236">90</text><text x="1964.15" y="1371.60" font-size="14.5" font-weight="bold" fill="#fff" letter-spacing="1.286">100</text><text x="2234.00" y="1368.20" font-size="33.5" font-weight="bold" fill="#303030" letter-spacing="-1.185">Back</text><text x="2394.10" y="1368.20" font-size="33.5" font-weight="bold" fill="#303030" letter-spacing="2.082">Next</text></svg>
</body></html>
